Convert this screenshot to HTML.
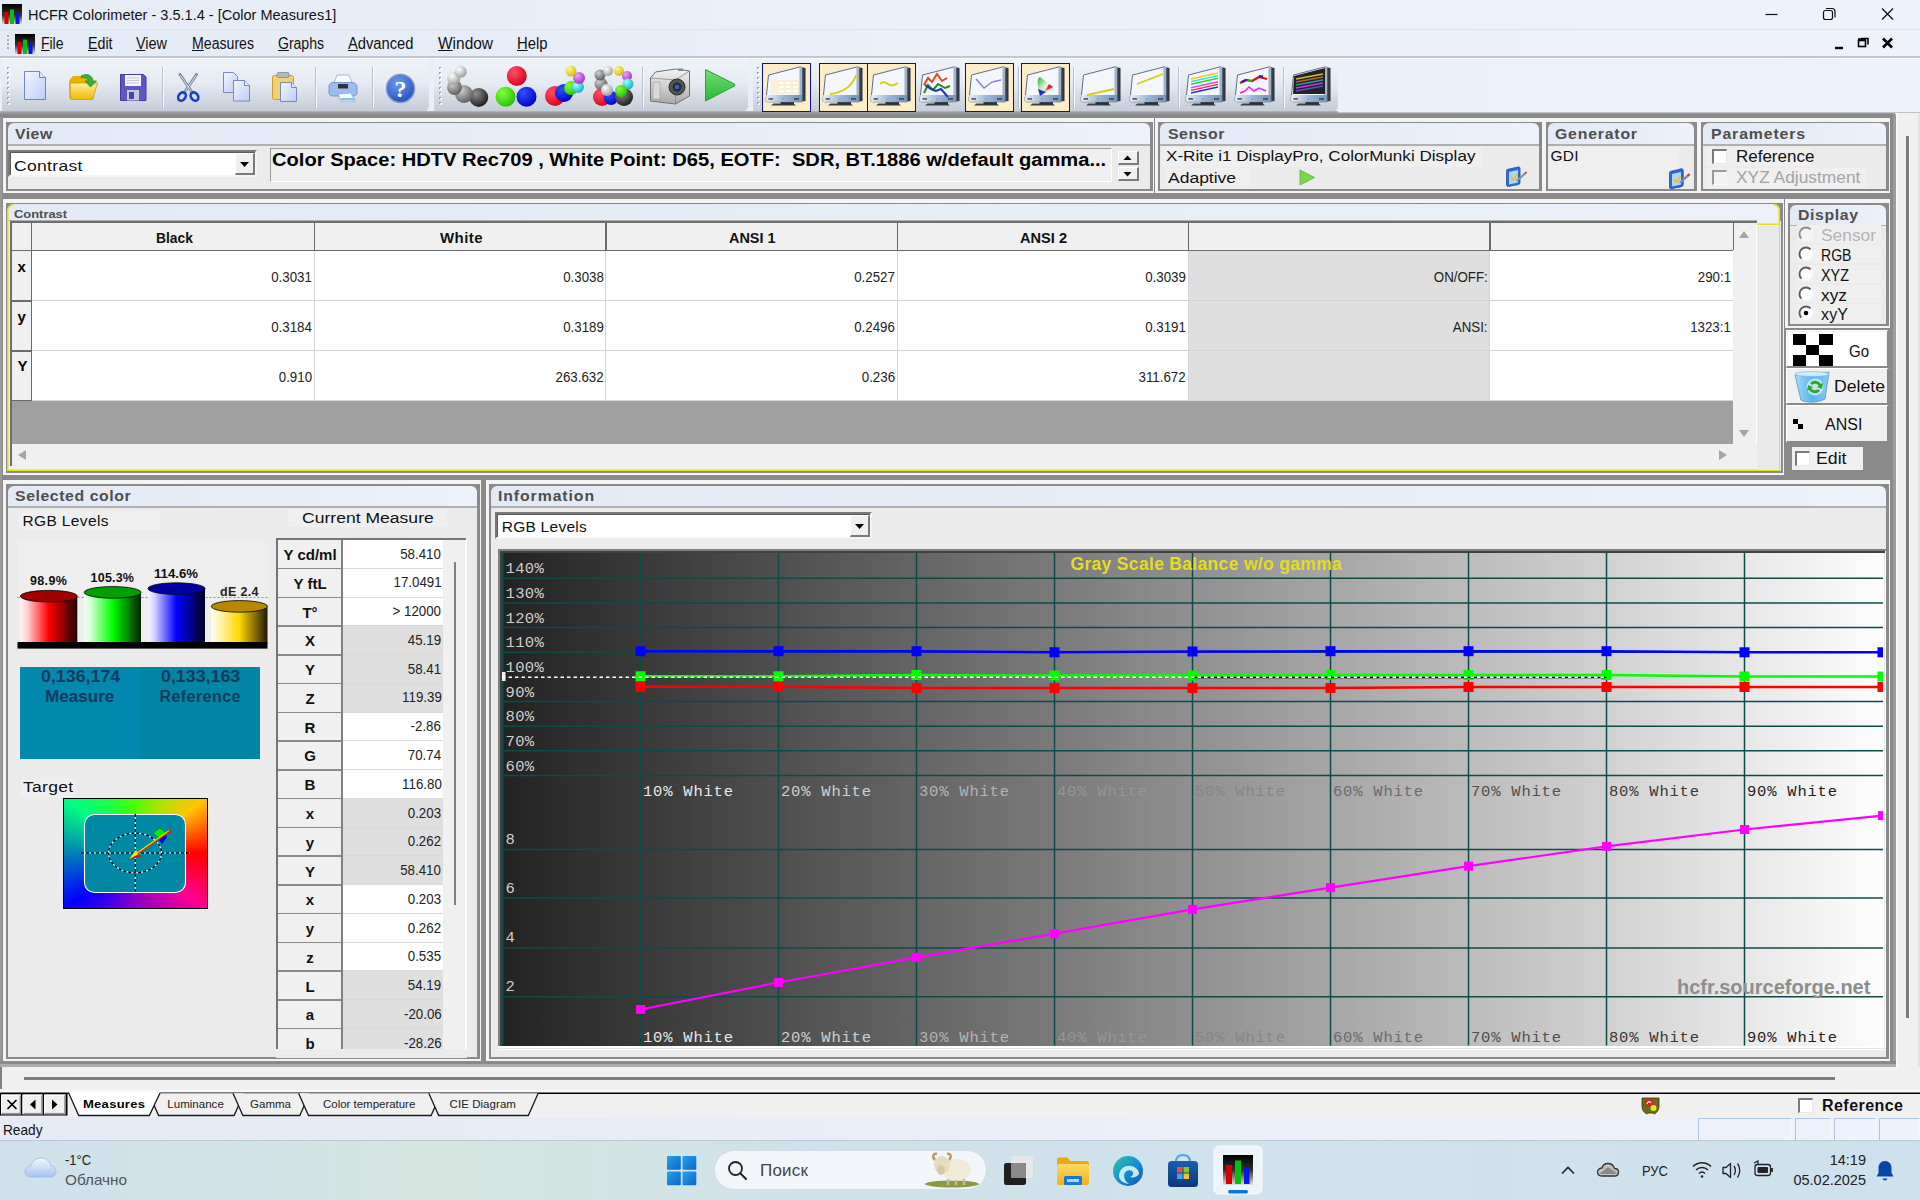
<!DOCTYPE html><html><head><meta charset="utf-8"><title>HCFR Colorimeter</title><style>
*{box-sizing:border-box;margin:0;padding:0}
html,body{width:1920px;height:1200px;overflow:hidden;background:#8a8a8a;font-family:"Liberation Sans",sans-serif;font-size:15px;color:#000}
.a{position:absolute}
.t{position:absolute;white-space:nowrap;line-height:1}
.m{font-family:"Liberation Mono",monospace}
.b{font-weight:bold}
.panel{position:absolute;background:#f4f4f4}
.panel>.in{position:absolute;left:3px;top:4px;right:1.5px;bottom:1.8px;background:#8a8a8a}
.panel>.hd{position:absolute;left:5px;right:4px;top:5.5px;background:#e5ecf6;border-radius:6px 6px 0 0}
.panel>.ln{position:absolute;left:5px;right:4px;height:1.5px;background:#b0b0b0}
.panel>.bd{position:absolute;left:5px;right:4px;bottom:4px;background:#ebebeb}
svg{position:absolute;overflow:visible}
</style></head><body>
<div class="a" style="left:0px;top:0px;width:1920px;height:29px;background:linear-gradient(90deg,#e5ecf6,#ebf0f9 50%,#eef2fa);"></div>
<div class="a" style="left:0px;top:28.5px;width:1920px;height:1px;background:#dce2ec;"></div>
<svg style="left:2px;top:4px" width="20" height="20" viewBox="0 0 20 20"><defs><linearGradient id="ig2" x1="0" y1="0" x2="0" y2="1"><stop offset="0" stop-color="#000"/><stop offset="0.55" stop-color="#333"/><stop offset="1" stop-color="#ddd"/></linearGradient></defs><rect width="20" height="20" fill="url(#ig2)"/><rect x="2.5" y="8" width="4" height="12" fill="#d80000"/><rect x="8" y="5.500" width="4" height="14.500" fill="#08c008"/><rect x="13.500" y="9.500" width="4" height="10.500" fill="#0818e0"/></svg>
<div class="t" style="left:27.5px;top:6.9px;font-size:15.5px;color:#111;letter-spacing:0.00px;transform:scaleX(0.937);transform-origin:0 50%;">HCFR Colorimeter - 3.5.1.4 - [Color Measures1]</div>
<svg style="left:0;top:0" width="1920" height="29"><path d="M1765.5 14.5h12" stroke="#111" stroke-width="1.2" fill="none"/><rect x="1823.5" y="10.5" width="9" height="9" rx="2" fill="none" stroke="#111" stroke-width="1.2"/><path d="M1826 8.5h6a3 3 0 0 1 3 3v6" fill="none" stroke="#111" stroke-width="1.2"/><path d="M1882 8.5l11 11M1893 8.5l-11 11" stroke="#111" stroke-width="1.3" fill="none"/></svg>
<div class="a" style="left:0px;top:29.5px;width:1920px;height:29px;background:linear-gradient(90deg,#e4ebf5,#eaeff8 50%,#eef2fa);"></div>
<div class="a" style="left:0px;top:56px;width:1920px;height:1.5px;background:#c2c6ce;"></div>
<div class="a" style="left:0px;top:57.5px;width:1920px;height:1px;background:#fafcfe;"></div>
<div class="a" style="left:7px;top:35px;width:2px;height:2px;background:#9fb0c8;"></div>
<div class="a" style="left:7px;top:39px;width:2px;height:2px;background:#9fb0c8;"></div>
<div class="a" style="left:7px;top:43px;width:2px;height:2px;background:#9fb0c8;"></div>
<div class="a" style="left:7px;top:47px;width:2px;height:2px;background:#9fb0c8;"></div>
<svg style="left:15px;top:34px" width="20" height="20" viewBox="0 0 20 20"><defs><linearGradient id="ig15" x1="0" y1="0" x2="0" y2="1"><stop offset="0" stop-color="#000"/><stop offset="0.55" stop-color="#333"/><stop offset="1" stop-color="#ddd"/></linearGradient></defs><rect width="20" height="20" fill="url(#ig15)"/><rect x="2.5" y="8" width="4" height="12" fill="#d80000"/><rect x="8" y="5.500" width="4" height="14.500" fill="#08c008"/><rect x="13.500" y="9.500" width="4" height="10.500" fill="#0818e0"/></svg>
<div class="t" style="left:41.0px;top:36.0px;font-size:16px;color:#111;letter-spacing:-0.07px;transform:scaleX(0.880);transform-origin:0 50%;"><u>F</u>ile</div>
<div class="t" style="left:87.5px;top:36.0px;font-size:16px;color:#111;letter-spacing:0.00px;transform:scaleX(0.889);transform-origin:0 50%;"><u>E</u>dit</div>
<div class="t" style="left:136.0px;top:36.0px;font-size:16px;color:#111;letter-spacing:0.00px;transform:scaleX(0.901);transform-origin:0 50%;"><u>V</u>iew</div>
<div class="t" style="left:191.5px;top:36.0px;font-size:16px;color:#111;letter-spacing:0.00px;transform:scaleX(0.883);transform-origin:0 50%;"><u>M</u>easures</div>
<div class="t" style="left:277.5px;top:36.0px;font-size:16px;color:#111;letter-spacing:-0.04px;transform:scaleX(0.880);transform-origin:0 50%;"><u>G</u>raphs</div>
<div class="t" style="left:347.5px;top:36.0px;font-size:16px;color:#111;letter-spacing:0.00px;transform:scaleX(0.920);transform-origin:0 50%;"><u>A</u>dvanced</div>
<div class="t" style="left:437.5px;top:36.0px;font-size:16px;color:#111;letter-spacing:0.00px;transform:scaleX(0.967);transform-origin:0 50%;"><u>W</u>indow</div>
<div class="t" style="left:516.5px;top:36.0px;font-size:16px;color:#111;letter-spacing:0.00px;transform:scaleX(0.927);transform-origin:0 50%;"><u>H</u>elp</div>
<svg style="left:0;top:29px" width="1920" height="29"><path d="M1835 19h8" stroke="#000" stroke-width="2.4"/><rect x="1858.5" y="11.5" width="7" height="6" fill="#e8edf6" stroke="#000" stroke-width="1.6"/><path d="M1861 9.5h7v6" fill="none" stroke="#000" stroke-width="1.6"/><path d="M1858 10.2h8" stroke="#000" stroke-width="2"/><path d="M1883 9.5l9 9M1892 9.5l-9 9" stroke="#000" stroke-width="2.6"/></svg>
<div class="a" style="left:0px;top:58.5px;width:1920px;height:55px;background:linear-gradient(90deg,#e8edf6,#ebf0f8 60%,#eef2fa);"></div>
<div class="a" style="left:2px;top:59px;width:427px;height:53px;background:linear-gradient(#eff3f9 0%,#e6ebf3 45%,#d3d9e3 75%,#c6cdd8 100%);border-radius:0 0 6px 3px"></div>
<div class="a" style="left:434px;top:59px;width:314px;height:53px;background:linear-gradient(#eff3f9 0%,#e6ebf3 45%,#d3d9e3 75%,#c6cdd8 100%);border-radius:0 0 6px 3px"></div>
<div class="a" style="left:753px;top:59px;width:585px;height:53px;background:linear-gradient(#eff3f9 0%,#e6ebf3 45%,#d3d9e3 75%,#c6cdd8 100%);border-radius:0 0 6px 3px"></div>
<div class="a" style="left:0px;top:111px;width:1338px;height:2px;background:linear-gradient(#b4bac4,#8f949c);"></div>
<div class="a" style="left:1338px;top:112.3px;width:582px;height:1px;background:#c0c4cc;"></div>
<div class="a" style="left:7px;top:67px;width:2px;height:2px;background:#8fa4c4;"></div>
<div class="a" style="left:8px;top:68px;width:2px;height:2px;background:#fff;opacity:.8"></div>
<div class="a" style="left:7px;top:72px;width:2px;height:2px;background:#8fa4c4;"></div>
<div class="a" style="left:8px;top:73px;width:2px;height:2px;background:#fff;opacity:.8"></div>
<div class="a" style="left:7px;top:77px;width:2px;height:2px;background:#8fa4c4;"></div>
<div class="a" style="left:8px;top:78px;width:2px;height:2px;background:#fff;opacity:.8"></div>
<div class="a" style="left:7px;top:82px;width:2px;height:2px;background:#8fa4c4;"></div>
<div class="a" style="left:8px;top:83px;width:2px;height:2px;background:#fff;opacity:.8"></div>
<div class="a" style="left:7px;top:87px;width:2px;height:2px;background:#8fa4c4;"></div>
<div class="a" style="left:8px;top:88px;width:2px;height:2px;background:#fff;opacity:.8"></div>
<div class="a" style="left:7px;top:92px;width:2px;height:2px;background:#8fa4c4;"></div>
<div class="a" style="left:8px;top:93px;width:2px;height:2px;background:#fff;opacity:.8"></div>
<div class="a" style="left:7px;top:97px;width:2px;height:2px;background:#8fa4c4;"></div>
<div class="a" style="left:8px;top:98px;width:2px;height:2px;background:#fff;opacity:.8"></div>
<div class="a" style="left:7px;top:102px;width:2px;height:2px;background:#8fa4c4;"></div>
<div class="a" style="left:8px;top:103px;width:2px;height:2px;background:#fff;opacity:.8"></div>
<div class="a" style="left:439px;top:67px;width:2px;height:2px;background:#8fa4c4;"></div>
<div class="a" style="left:440px;top:68px;width:2px;height:2px;background:#fff;opacity:.8"></div>
<div class="a" style="left:439px;top:72px;width:2px;height:2px;background:#8fa4c4;"></div>
<div class="a" style="left:440px;top:73px;width:2px;height:2px;background:#fff;opacity:.8"></div>
<div class="a" style="left:439px;top:77px;width:2px;height:2px;background:#8fa4c4;"></div>
<div class="a" style="left:440px;top:78px;width:2px;height:2px;background:#fff;opacity:.8"></div>
<div class="a" style="left:439px;top:82px;width:2px;height:2px;background:#8fa4c4;"></div>
<div class="a" style="left:440px;top:83px;width:2px;height:2px;background:#fff;opacity:.8"></div>
<div class="a" style="left:439px;top:87px;width:2px;height:2px;background:#8fa4c4;"></div>
<div class="a" style="left:440px;top:88px;width:2px;height:2px;background:#fff;opacity:.8"></div>
<div class="a" style="left:439px;top:92px;width:2px;height:2px;background:#8fa4c4;"></div>
<div class="a" style="left:440px;top:93px;width:2px;height:2px;background:#fff;opacity:.8"></div>
<div class="a" style="left:439px;top:97px;width:2px;height:2px;background:#8fa4c4;"></div>
<div class="a" style="left:440px;top:98px;width:2px;height:2px;background:#fff;opacity:.8"></div>
<div class="a" style="left:439px;top:102px;width:2px;height:2px;background:#8fa4c4;"></div>
<div class="a" style="left:440px;top:103px;width:2px;height:2px;background:#fff;opacity:.8"></div>
<div class="a" style="left:757px;top:67px;width:2px;height:2px;background:#8fa4c4;"></div>
<div class="a" style="left:758px;top:68px;width:2px;height:2px;background:#fff;opacity:.8"></div>
<div class="a" style="left:757px;top:72px;width:2px;height:2px;background:#8fa4c4;"></div>
<div class="a" style="left:758px;top:73px;width:2px;height:2px;background:#fff;opacity:.8"></div>
<div class="a" style="left:757px;top:77px;width:2px;height:2px;background:#8fa4c4;"></div>
<div class="a" style="left:758px;top:78px;width:2px;height:2px;background:#fff;opacity:.8"></div>
<div class="a" style="left:757px;top:82px;width:2px;height:2px;background:#8fa4c4;"></div>
<div class="a" style="left:758px;top:83px;width:2px;height:2px;background:#fff;opacity:.8"></div>
<div class="a" style="left:757px;top:87px;width:2px;height:2px;background:#8fa4c4;"></div>
<div class="a" style="left:758px;top:88px;width:2px;height:2px;background:#fff;opacity:.8"></div>
<div class="a" style="left:757px;top:92px;width:2px;height:2px;background:#8fa4c4;"></div>
<div class="a" style="left:758px;top:93px;width:2px;height:2px;background:#fff;opacity:.8"></div>
<div class="a" style="left:757px;top:97px;width:2px;height:2px;background:#8fa4c4;"></div>
<div class="a" style="left:758px;top:98px;width:2px;height:2px;background:#fff;opacity:.8"></div>
<div class="a" style="left:757px;top:102px;width:2px;height:2px;background:#8fa4c4;"></div>
<div class="a" style="left:758px;top:103px;width:2px;height:2px;background:#fff;opacity:.8"></div>
<div class="a" style="left:162px;top:67px;width:1px;height:41px;background:#b8c0cc;"></div>
<div class="a" style="left:163px;top:67px;width:1px;height:41px;background:#f8fafc;"></div>
<div class="a" style="left:315px;top:67px;width:1px;height:41px;background:#b8c0cc;"></div>
<div class="a" style="left:316px;top:67px;width:1px;height:41px;background:#f8fafc;"></div>
<div class="a" style="left:372px;top:67px;width:1px;height:41px;background:#b8c0cc;"></div>
<div class="a" style="left:373px;top:67px;width:1px;height:41px;background:#f8fafc;"></div>
<div class="a" style="left:642px;top:67px;width:1px;height:41px;background:#b8c0cc;"></div>
<div class="a" style="left:643px;top:67px;width:1px;height:41px;background:#f8fafc;"></div>
<div class="a" style="left:1018px;top:67px;width:1px;height:41px;background:#b8c0cc;"></div>
<div class="a" style="left:1019px;top:67px;width:1px;height:41px;background:#f8fafc;"></div>
<div class="a" style="left:1073px;top:67px;width:1px;height:41px;background:#b8c0cc;"></div>
<div class="a" style="left:1074px;top:67px;width:1px;height:41px;background:#f8fafc;"></div>
<div class="a" style="left:1178px;top:67px;width:1px;height:41px;background:#b8c0cc;"></div>
<div class="a" style="left:1179px;top:67px;width:1px;height:41px;background:#f8fafc;"></div>
<div class="a" style="left:1283px;top:67px;width:1px;height:41px;background:#b8c0cc;"></div>
<div class="a" style="left:1284px;top:67px;width:1px;height:41px;background:#f8fafc;"></div>
<div class="a" style="left:762px;top:63px;width:49px;height:49px;background:#fdecc8;border:1.5px solid #10108c"></div>
<div class="a" style="left:819px;top:63px;width:49px;height:49px;background:#fdecc8;border:1.5px solid #10108c"></div>
<div class="a" style="left:867px;top:63px;width:49px;height:49px;background:#fdecc8;border:1.5px solid #10108c"></div>
<div class="a" style="left:965px;top:63px;width:49px;height:49px;background:#fdecc8;border:1.5px solid #10108c"></div>
<div class="a" style="left:1021px;top:63px;width:49px;height:49px;background:#fdecc8;border:1.5px solid #10108c"></div>
<svg style="left:0;top:0" width="1920" height="116"><defs><linearGradient id="gpage" x1="0" y1="0" x2="1" y2="1"><stop offset="0" stop-color="#f4f7ff"/><stop offset="1" stop-color="#bccdf4"/></linearGradient><linearGradient id="gfold" x1="0" y1="0" x2="0" y2="1"><stop offset="0" stop-color="#fff0a0"/><stop offset="1" stop-color="#f0b800"/></linearGradient><radialGradient id="ghelp" cx=".4" cy=".3" r=".8"><stop offset="0" stop-color="#6f9bf0"/><stop offset="1" stop-color="#1b49b8"/></radialGradient><radialGradient id="bR" cx=".35" cy=".3" r=".75"><stop offset="0" stop-color="#ff5060"/><stop offset="1" stop-color="#d80020"/></radialGradient><radialGradient id="bG" cx=".35" cy=".3" r=".75"><stop offset="0" stop-color="#80ff40"/><stop offset="1" stop-color="#28c000"/></radialGradient><radialGradient id="bB" cx=".35" cy=".3" r=".75"><stop offset="0" stop-color="#3050ff"/><stop offset="1" stop-color="#0000c8"/></radialGradient><radialGradient id="bW" cx=".35" cy=".3" r=".75"><stop offset="0" stop-color="#ffffff"/><stop offset="1" stop-color="#9a9a9a"/></radialGradient><radialGradient id="bK" cx=".35" cy=".3" r=".75"><stop offset="0" stop-color="#909090"/><stop offset="1" stop-color="#1a1a1a"/></radialGradient><radialGradient id="bY" cx=".35" cy=".3" r=".75"><stop offset="0" stop-color="#fff890"/><stop offset="1" stop-color="#d8b800"/></radialGradient><radialGradient id="bM" cx=".35" cy=".3" r=".75"><stop offset="0" stop-color="#f0a0ff"/><stop offset="1" stop-color="#a030c0"/></radialGradient><radialGradient id="bC" cx=".35" cy=".3" r=".75"><stop offset="0" stop-color="#a0ffff"/><stop offset="1" stop-color="#10b0c0"/></radialGradient><radialGradient id="bGr" cx=".35" cy=".3" r=".75"><stop offset="0" stop-color="#d0d0d0"/><stop offset="1" stop-color="#5a5a5a"/></radialGradient><linearGradient id="gbez" x1="0" y1="0" x2="1" y2="0"><stop offset="0" stop-color="#e8eef6"/><stop offset="0.5" stop-color="#9fb6d4"/><stop offset="1" stop-color="#6f8fb8"/></linearGradient><linearGradient id="gside" x1="0" y1="0" x2="1" y2="0"><stop offset="0" stop-color="#8a9ab0"/><stop offset="0.5" stop-color="#3a4250"/><stop offset="1" stop-color="#2a2e36"/></linearGradient><linearGradient id="gplay" x1="0" y1="0" x2="0" y2="1"><stop offset="0" stop-color="#70e070"/><stop offset="1" stop-color="#28b838"/></linearGradient><linearGradient id="gcam" x1="0" y1="0" x2="0" y2="1"><stop offset="0" stop-color="#f4f4f4"/><stop offset="1" stop-color="#a8a8a8"/></linearGradient></defs><path d="M24.5 71.5h15l6 6v22h-21z" fill="url(#gpage)" stroke="#6d86c4" stroke-width="1"/><path d="M39.5 71.5v6h6" fill="#dfe8fb" stroke="#6d86c4" stroke-width="1"/><path d="M70 79l3-3h8l2 2h10v5H70z" fill="#e8b000"/><path d="M69.5 83h24l4 0-5 16.5H71z" fill="url(#gfold)" stroke="#d09a00" stroke-width=".8"/><path d="M70 80v19" stroke="#d8a400" stroke-width="1.2"/><path d="M81 76c6-3 11-1 12 5h3.5l-6 6-5.5-6h3.5c-1-3-4-4-7-3z" fill="#38b040" stroke="#1f8a2a" stroke-width=".7"/><path d="M120.5 74.5h23l2.500 2.500v23.5h-25.500z" fill="#5c58c4" stroke="#3f3ca0" stroke-width="1"/><rect x="125" y="75" width="16" height="11" fill="#f4f4f8"/><path d="M127 78h12M127 80.5h12M127 83h12" stroke="#b8b8c8" stroke-width=".8"/><rect x="127" y="90" width="12" height="10.5" fill="#c8c8d8"/><rect x="129" y="92" width="5" height="7" fill="#4844a8"/><path d="M180 74.500l12.500 18.500M196.500 74.500l-12.500 18.500" stroke="#7c8aa0" stroke-width="3" stroke-linecap="round"/><path d="M180.300 75l12 18M196.200 75l-12 18" stroke="#d4dae4" stroke-width="1"/><ellipse cx="182" cy="96.500" rx="3.400" ry="4.600" transform="rotate(35 182 96.500)" fill="none" stroke="#1440c0" stroke-width="2.600"/><ellipse cx="194.500" cy="96.500" rx="3.400" ry="4.600" transform="rotate(-35 194.500 96.500)" fill="none" stroke="#1440c0" stroke-width="2.600"/><path d="M223.500 72.500h10l4 4v16h-14z" fill="url(#gpage)" stroke="#7a88c0" stroke-width="1"/><path d="M233.500 80.500h11l5 5v15.500h-16z" fill="url(#gpage)" stroke="#7a88c0" stroke-width="1"/><path d="M244.500 80.500v5h5" fill="#e4ecfc" stroke="#7a88c0" stroke-width="1"/><rect x="272.500" y="75.500" width="21" height="24" rx="2" fill="#f0d070" stroke="#c8a030" stroke-width="1"/><rect x="277" y="72.500" width="12" height="5" rx="1.500" fill="#b8b8c0" stroke="#888" stroke-width=".8"/><path d="M280.500 82.500h11l5 5v14h-16z" fill="url(#gpage)" stroke="#7a88c0" stroke-width="1"/><path d="M291.500 82.500v5h5" fill="#e4ecfc" stroke="#7a88c0" stroke-width="1"/><path d="M333 86l4-11h12l3 8z" fill="#fafcff" stroke="#90a8d0" stroke-width=".8"/><path d="M329 86c0-2 2-3.500 4-3.500h19c3 0 5 2 5 4.500v6c0 2-2 3-4 3h-20c-2 0-4-1-4-3z" fill="#9cbcec" stroke="#6488c8" stroke-width=".8"/><rect x="338" y="84" width="10" height="4.500" fill="#30343c"/><path d="M338 94l3 7h14l-4-8z" fill="#f8fbff" stroke="#80a8e0" stroke-width=".8"/><path d="M341 99h13" stroke="#50b0f0" stroke-width="1.500"/><circle cx="400.500" cy="88.500" r="14" fill="url(#ghelp)" stroke="#8098c8" stroke-width="1.500"/><text x="400.500" y="96.500" font-family="Liberation Serif" font-weight="bold" font-size="24" fill="#fff" text-anchor="middle">?</text><circle cx="478.7" cy="97.4" r="9.5" fill="url(#bK)"/><circle cx="464" cy="94" r="9" fill="url(#bGr)"/><circle cx="454.5" cy="87.4" r="7.5" fill="url(#bGr)"/><circle cx="453.7" cy="78.4" r="6.5" fill="url(#bW)"/><circle cx="460.8" cy="71.7" r="6" fill="url(#bW)"/><circle cx="516.800" cy="76" r="10" fill="url(#bR)"/><circle cx="505.600" cy="96.800" r="10" fill="url(#bG)"/><circle cx="526.500" cy="96.800" r="10" fill="url(#bB)"/><circle cx="555" cy="96" r="10" fill="url(#bR)"/><circle cx="564" cy="93" r="9" fill="url(#bB)"/><circle cx="571" cy="88" r="7" fill="url(#bG)"/><circle cx="578" cy="87" r="6" fill="url(#bC)"/><circle cx="579" cy="78" r="6" fill="url(#bM)"/><circle cx="571" cy="71" r="5.5" fill="url(#bY)"/><circle cx="602" cy="97" r="9" fill="url(#bR)"/><circle cx="611" cy="98" r="7" fill="url(#bB)"/><circle cx="624" cy="97" r="9" fill="url(#bK)"/><circle cx="601" cy="84" r="6.5" fill="url(#bGr)"/><circle cx="600" cy="75" r="5.5" fill="url(#bGr)"/><circle cx="608" cy="71" r="5" fill="url(#bW)"/><circle cx="619" cy="71" r="5" fill="url(#bY)"/><circle cx="627" cy="76" r="5" fill="url(#bM)"/><circle cx="628" cy="84" r="5.5" fill="url(#bC)"/><circle cx="621" cy="91" r="6" fill="url(#bG)"/><circle cx="607" cy="90" r="6" fill="url(#bW)"/><path d="M650.500 78l5-6 20-3 14 2v25l-14 8-25-3z" fill="url(#gcam)" stroke="#707070" stroke-width="1"/><path d="M650.500 78l25 2v24M675.500 80l14-9" stroke="#888" stroke-width=".8" fill="none"/><rect x="653" y="82" width="7" height="17" fill="#d8d8d8" stroke="#999" stroke-width=".6"/><circle cx="677" cy="87" r="8" fill="#505458" stroke="#303030" stroke-width="1"/><circle cx="677" cy="87" r="4.500" fill="#2a2c30"/><circle cx="677" cy="87" r="2.200" fill="#2868d8"/><rect x="678" y="68.500" width="5" height="2.500" fill="#888"/><path d="M705.500 69.500l29 14.500v2l-29 15z" fill="url(#gplay)" stroke="#30a040" stroke-width="1"/><g transform="translate(762 63)"><path d="M9 42.5h25l-2.5-2h-20z" fill="#3a3f48"/><rect x="18.5" y="38.5" width="13.5" height="3" fill="#2c3038"/><path d="M38.5 4l5 1v33l-5 0.8z" fill="url(#gside)"/><path d="M6.5 12L38.5 3.8c1 0 1.5 .5 1.5 1.5V38.8H5.5c-1.2 0-1.6-.8-1.5-2z" fill="#f4f6fa" stroke="#5c6e88" stroke-width="1"/><path d="M4.3 32H40v6.8H5.5c-1.2 0-1.6-.8-1.5-2z" fill="url(#gbez)"/><rect x="6.5" y="35" width="4.5" height="1.8" fill="#5a626e"/><rect x="32" y="35" width="5" height="1.8" fill="#4a525e"/><circle cx="21" cy="36" r=".8" fill="#7890b0"/><path d="M38.2 5v33.5" stroke="#8aa0c0" stroke-width="1.2"/></g><rect x="771" y="80" width="28" height="14" fill="#fdecc8" opacity=".7"/><rect x="779" y="82" width="4.500" height="2" fill="#fff"/><rect x="786" y="82" width="4.500" height="2" fill="#fff"/><rect x="793" y="82" width="4.500" height="2" fill="#fff"/><rect x="779" y="86" width="4.500" height="2" fill="#fff"/><rect x="786" y="86" width="4.500" height="2" fill="#fff"/><rect x="793" y="86" width="4.500" height="2" fill="#fff"/><rect x="779" y="90" width="4.500" height="2" fill="#fff"/><rect x="786" y="90" width="4.500" height="2" fill="#fff"/><rect x="793" y="90" width="4.500" height="2" fill="#fff"/><g transform="translate(819 63)"><path d="M9 42.5h25l-2.5-2h-20z" fill="#3a3f48"/><rect x="18.5" y="38.5" width="13.5" height="3" fill="#2c3038"/><path d="M38.5 4l5 1v33l-5 0.8z" fill="url(#gside)"/><path d="M6.5 12L38.5 3.8c1 0 1.5 .5 1.5 1.5V38.8H5.5c-1.2 0-1.6-.8-1.5-2z" fill="#f4f6fa" stroke="#5c6e88" stroke-width="1"/><path d="M4.3 32H40v6.8H5.5c-1.2 0-1.6-.8-1.5-2z" fill="url(#gbez)"/><rect x="6.5" y="35" width="4.5" height="1.8" fill="#5a626e"/><rect x="32" y="35" width="5" height="1.8" fill="#4a525e"/><circle cx="21" cy="36" r=".8" fill="#7890b0"/><path d="M38.2 5v33.5" stroke="#8aa0c0" stroke-width="1.2"/></g><path d="M830 94c10-1 22-6 26-19" stroke="#d8d000" stroke-width="1.800" fill="none"/><g transform="translate(867 63)"><path d="M9 42.5h25l-2.5-2h-20z" fill="#3a3f48"/><rect x="18.5" y="38.5" width="13.5" height="3" fill="#2c3038"/><path d="M38.5 4l5 1v33l-5 0.8z" fill="url(#gside)"/><path d="M6.5 12L38.5 3.8c1 0 1.5 .5 1.5 1.5V38.8H5.5c-1.2 0-1.6-.8-1.5-2z" fill="#f4f6fa" stroke="#5c6e88" stroke-width="1"/><path d="M4.3 32H40v6.8H5.5c-1.2 0-1.6-.8-1.5-2z" fill="url(#gbez)"/><rect x="6.5" y="35" width="4.5" height="1.8" fill="#5a626e"/><rect x="32" y="35" width="5" height="1.8" fill="#4a525e"/><circle cx="21" cy="36" r=".8" fill="#7890b0"/><path d="M38.2 5v33.5" stroke="#8aa0c0" stroke-width="1.2"/></g><path d="M880 84c3-3 5-2 8 0s5 2 10-1" stroke="#d8d000" stroke-width="1.800" fill="none"/><g transform="translate(916 63)"><path d="M9 42.5h25l-2.5-2h-20z" fill="#3a3f48"/><rect x="18.5" y="38.5" width="13.5" height="3" fill="#2c3038"/><path d="M38.5 4l5 1v33l-5 0.8z" fill="url(#gside)"/><path d="M6.5 12L38.5 3.8c1 0 1.5 .5 1.5 1.5V38.8H5.5c-1.2 0-1.6-.8-1.5-2z" fill="#f4f6fa" stroke="#5c6e88" stroke-width="1"/><path d="M4.3 32H40v6.8H5.5c-1.2 0-1.6-.8-1.5-2z" fill="url(#gbez)"/><rect x="6.5" y="35" width="4.5" height="1.8" fill="#5a626e"/><rect x="32" y="35" width="5" height="1.8" fill="#4a525e"/><circle cx="21" cy="36" r=".8" fill="#7890b0"/><path d="M38.2 5v33.5" stroke="#8aa0c0" stroke-width="1.2"/></g><path d="M924 85l4-7 4 4 5-8 5 7 5-3" stroke="#e04818" stroke-width="2" fill="none"/><path d="M924 93l4-8 5 5 5-6 7 4 5-2" stroke="#189020" stroke-width="2" fill="none"/><path d="M925 85l6 4 5 2 5-2 7 8" stroke="#1838c0" stroke-width="2" fill="none"/><g transform="translate(965 63)"><path d="M9 42.5h25l-2.5-2h-20z" fill="#3a3f48"/><rect x="18.5" y="38.5" width="13.5" height="3" fill="#2c3038"/><path d="M38.5 4l5 1v33l-5 0.8z" fill="url(#gside)"/><path d="M6.5 12L38.5 3.8c1 0 1.5 .5 1.5 1.5V38.8H5.5c-1.2 0-1.6-.8-1.5-2z" fill="#f4f6fa" stroke="#5c6e88" stroke-width="1"/><path d="M4.3 32H40v6.8H5.5c-1.2 0-1.6-.8-1.5-2z" fill="url(#gbez)"/><rect x="6.5" y="35" width="4.5" height="1.8" fill="#5a626e"/><rect x="32" y="35" width="5" height="1.8" fill="#4a525e"/><circle cx="21" cy="36" r=".8" fill="#7890b0"/><path d="M38.2 5v33.5" stroke="#8aa0c0" stroke-width="1.2"/></g><path d="M976 79l8 9 8-6 9-2" stroke="#8878e0" stroke-width="1.300" fill="none"/><g transform="translate(1021 63)"><path d="M9 42.5h25l-2.5-2h-20z" fill="#3a3f48"/><rect x="18.5" y="38.5" width="13.5" height="3" fill="#2c3038"/><path d="M38.5 4l5 1v33l-5 0.8z" fill="url(#gside)"/><path d="M6.5 12L38.5 3.8c1 0 1.5 .5 1.5 1.5V38.8H5.5c-1.2 0-1.6-.8-1.5-2z" fill="#f4f6fa" stroke="#5c6e88" stroke-width="1"/><path d="M4.3 32H40v6.8H5.5c-1.2 0-1.6-.8-1.5-2z" fill="url(#gbez)"/><rect x="6.5" y="35" width="4.5" height="1.8" fill="#5a626e"/><rect x="32" y="35" width="5" height="1.8" fill="#4a525e"/><circle cx="21" cy="36" r=".8" fill="#7890b0"/><path d="M38.2 5v33.5" stroke="#8aa0c0" stroke-width="1.2"/></g><defs><linearGradient id="gcie" x1="0" y1="0" x2="1" y2="1"><stop offset="0" stop-color="#10c030"/><stop offset=".5" stop-color="#f0f0e0"/><stop offset="1" stop-color="#e02020"/></linearGradient></defs><path d="M1040 77c-2 0-3 4-2 10l2 9 13-9z" fill="url(#gcie)"/><path d="M1038 89l2 7 6-4z" fill="#2030e0"/><path d="M1046 90l7-3-4-3z" fill="#f02020"/><g transform="translate(1077 63)"><path d="M9 42.5h25l-2.5-2h-20z" fill="#3a3f48"/><rect x="18.5" y="38.5" width="13.5" height="3" fill="#2c3038"/><path d="M38.5 4l5 1v33l-5 0.8z" fill="url(#gside)"/><path d="M6.5 12L38.5 3.8c1 0 1.5 .5 1.5 1.5V38.8H5.5c-1.2 0-1.6-.8-1.5-2z" fill="#f4f6fa" stroke="#5c6e88" stroke-width="1"/><path d="M4.3 32H40v6.8H5.5c-1.2 0-1.6-.8-1.5-2z" fill="url(#gbez)"/><rect x="6.5" y="35" width="4.5" height="1.8" fill="#5a626e"/><rect x="32" y="35" width="5" height="1.8" fill="#4a525e"/><circle cx="21" cy="36" r=".8" fill="#7890b0"/><path d="M38.2 5v33.5" stroke="#8aa0c0" stroke-width="1.2"/></g><path d="M1087 95l27-6" stroke="#d8d000" stroke-width="1.800" fill="none"/><g transform="translate(1126 63)"><path d="M9 42.5h25l-2.5-2h-20z" fill="#3a3f48"/><rect x="18.5" y="38.5" width="13.5" height="3" fill="#2c3038"/><path d="M38.5 4l5 1v33l-5 0.8z" fill="url(#gside)"/><path d="M6.5 12L38.5 3.8c1 0 1.5 .5 1.5 1.5V38.8H5.5c-1.2 0-1.6-.8-1.5-2z" fill="#f4f6fa" stroke="#5c6e88" stroke-width="1"/><path d="M4.3 32H40v6.8H5.5c-1.2 0-1.6-.8-1.5-2z" fill="url(#gbez)"/><rect x="6.5" y="35" width="4.5" height="1.8" fill="#5a626e"/><rect x="32" y="35" width="5" height="1.8" fill="#4a525e"/><circle cx="21" cy="36" r=".8" fill="#7890b0"/><path d="M38.2 5v33.5" stroke="#8aa0c0" stroke-width="1.2"/></g><path d="M1137 84l26-10" stroke="#d8d000" stroke-width="1.800" fill="none"/><g transform="translate(1182 63)"><path d="M9 42.5h25l-2.5-2h-20z" fill="#3a3f48"/><rect x="18.5" y="38.5" width="13.5" height="3" fill="#2c3038"/><path d="M38.5 4l5 1v33l-5 0.8z" fill="url(#gside)"/><path d="M6.5 12L38.5 3.8c1 0 1.5 .5 1.5 1.5V38.8H5.5c-1.2 0-1.6-.8-1.5-2z" fill="#f4f6fa" stroke="#5c6e88" stroke-width="1"/><path d="M4.3 32H40v6.8H5.5c-1.2 0-1.6-.8-1.5-2z" fill="url(#gbez)"/><rect x="6.5" y="35" width="4.5" height="1.8" fill="#5a626e"/><rect x="32" y="35" width="5" height="1.8" fill="#4a525e"/><circle cx="21" cy="36" r=".8" fill="#7890b0"/><path d="M38.2 5v33.5" stroke="#8aa0c0" stroke-width="1.2"/></g><path d="M1191 79.0l27-6" stroke="#e0d020" stroke-width="1.400" fill="none"/><path d="M1191 81.6l27-6" stroke="#20e0e0" stroke-width="1.400" fill="none"/><path d="M1191 84.2l27-6" stroke="#20e020" stroke-width="1.400" fill="none"/><path d="M1191 87.8l27-6" stroke="#f040f0" stroke-width="1.400" fill="none"/><path d="M1191 90.4l27-6" stroke="#f03030" stroke-width="1.400" fill="none"/><path d="M1191 93.0l27-6" stroke="#2030f0" stroke-width="1.400" fill="none"/><g transform="translate(1231 63)"><path d="M9 42.5h25l-2.5-2h-20z" fill="#3a3f48"/><rect x="18.5" y="38.5" width="13.5" height="3" fill="#2c3038"/><path d="M38.5 4l5 1v33l-5 0.8z" fill="url(#gside)"/><path d="M6.5 12L38.5 3.8c1 0 1.5 .5 1.5 1.5V38.8H5.5c-1.2 0-1.6-.8-1.5-2z" fill="#f4f6fa" stroke="#5c6e88" stroke-width="1"/><path d="M4.3 32H40v6.8H5.5c-1.2 0-1.6-.8-1.5-2z" fill="url(#gbez)"/><rect x="6.5" y="35" width="4.5" height="1.8" fill="#5a626e"/><rect x="32" y="35" width="5" height="1.8" fill="#4a525e"/><circle cx="21" cy="36" r=".8" fill="#7890b0"/><path d="M38.2 5v33.5" stroke="#8aa0c0" stroke-width="1.2"/></g><path d="M1240 83l6-3 6 1 7-4 8 2" stroke="#e01010" stroke-width="2.200" fill="none"/><path d="M1242 82l4-2M1259 76l4 .5" stroke="#1020e0" stroke-width="2.200" fill="none"/><path d="M1248 80.5l4 .5" stroke="#10c010" stroke-width="2.200"/><path d="M1240 93l5-2 4-4 5 4 5-3 7 3" stroke="#f020f0" stroke-width="1.500" fill="none"/><g transform="translate(1287 63)"><path d="M9 42.5h25l-2.5-2h-20z" fill="#3a3f48"/><rect x="18.5" y="38.5" width="13.5" height="3" fill="#2c3038"/><path d="M38.5 4l5 1v33l-5 0.8z" fill="url(#gside)"/><path d="M6.5 12L38.5 3.8c1 0 1.5 .5 1.5 1.5V38.8H5.5c-1.2 0-1.6-.8-1.5-2z" fill="#f4f6fa" stroke="#5c6e88" stroke-width="1"/><path d="M4.3 32H40v6.8H5.5c-1.2 0-1.6-.8-1.5-2z" fill="url(#gbez)"/><rect x="6.5" y="35" width="4.5" height="1.8" fill="#5a626e"/><rect x="32" y="35" width="5" height="1.8" fill="#4a525e"/><circle cx="21" cy="36" r=".8" fill="#7890b0"/><path d="M38.2 5v33.5" stroke="#8aa0c0" stroke-width="1.2"/></g><path d="M1294 76L1325 68V94H1293z" fill="#202428"/><path d="M1296 79l27-5" stroke="#d0c020" stroke-width="1.500" fill="none"/><path d="M1296 82l27-5" stroke="#c06020" stroke-width="1.500" fill="none"/><path d="M1296 85l27-5" stroke="#20a0a0" stroke-width="1.500" fill="none"/><path d="M1296 88l27-5" stroke="#e030e0" stroke-width="1.500" fill="none"/><path d="M1296 91l27-5" stroke="#6050c0" stroke-width="1.500" fill="none"/></svg>
<div class="a" style="left:1896px;top:113px;width:24px;height:980px;background:#f0f0f0;"></div>
<div class="a" style="left:1892.5px;top:114px;width:3.5px;height:953px;background:#9c9c9c;"></div>
<div class="a" style="left:1896px;top:113px;width:2px;height:955px;background:#f9f9f9;"></div>
<div class="a" style="left:1909px;top:136px;width:1px;height:882px;background:#fbfbfb;"></div>
<div class="a" style="left:1918px;top:113px;width:2px;height:980px;background:#e2e2e2;"></div>
<div class="a" style="left:1906px;top:136px;width:3px;height:882px;background:#7c7c7c;"></div>
<div class="a" style="left:0px;top:113px;width:1895px;height:1px;background:#9a9a9a;"></div>
<div class="a" style="left:0px;top:117px;width:2px;height:952px;background:#999;"></div>
<div class="panel" style="left:3px;top:117.5px;width:1151px;height:75px"><div class="in" style="background:#8a8a8a"></div><div class="hd" style="height:21px;background:linear-gradient(90deg,#e3eaf5,#e6edf7 50%,#ecf1fa)"></div><div class="ln" style="top:26.5px"></div><div class="bd" style="top:28px"></div></div>
<div class="t b" style="left:14.8px;top:126.9px;font-size:14px;color:#4e4e4e;letter-spacing:0.42px;transform:scaleX(1.130);transform-origin:0 50%;">View</div>
<div class="panel" style="left:1155px;top:117.5px;width:388px;height:75px"><div class="in" style="background:#8a8a8a"></div><div class="hd" style="height:21px;background:linear-gradient(90deg,#e3eaf5,#e6edf7 50%,#ecf1fa)"></div><div class="ln" style="top:26.5px"></div><div class="bd" style="top:28px"></div></div>
<div class="t b" style="left:1167.7px;top:127.1px;font-size:14px;color:#4e4e4e;letter-spacing:0.47px;transform:scaleX(1.130);transform-origin:0 50%;">Sensor</div>
<div class="panel" style="left:1543px;top:117.5px;width:155px;height:75px"><div class="in" style="background:#8a8a8a"></div><div class="hd" style="height:21px;background:linear-gradient(90deg,#e3eaf5,#e6edf7 50%,#ecf1fa)"></div><div class="ln" style="top:26.5px"></div><div class="bd" style="top:28px"></div></div>
<div class="t b" style="left:1555.4px;top:126.9px;font-size:14px;color:#4e4e4e;letter-spacing:0.71px;transform:scaleX(1.130);transform-origin:0 50%;">Generator</div>
<div class="panel" style="left:1698px;top:117.5px;width:192px;height:75px"><div class="in" style="background:#8a8a8a"></div><div class="hd" style="height:21px;background:linear-gradient(90deg,#e3eaf5,#e6edf7 50%,#ecf1fa)"></div><div class="ln" style="top:26.5px"></div><div class="bd" style="top:28px"></div></div>
<div class="t b" style="left:1710.6px;top:126.9px;font-size:14px;color:#4e4e4e;letter-spacing:0.78px;transform:scaleX(1.130);transform-origin:0 50%;">Parameters</div>
<div class="a" style="left:8px;top:150px;width:249px;height:27px;background:#fff;border-top:2px solid #7a7a7a;border-left:2px solid #7a7a7a;border-right:2px solid #f4f4f4;border-bottom:2px solid #f4f4f4;box-shadow:inset 1px 1px 0 #5a5a5a"></div>
<div class="a" style="left:235px;top:153px;width:20px;height:22px;background:#f0f0f0;border-top:1px solid #fff;border-left:1px solid #fff;border-right:2px solid #7a7a7a;border-bottom:2px solid #7a7a7a"></div>
<svg style="left:0;top:0" width="1920" height="1200"><path d="M240.0 162.0h9l-4.5 5z" fill="#000"/></svg>
<div class="t" style="left:14.2px;top:157.6px;font-size:15.5px;color:#111;letter-spacing:0.29px;transform:scaleX(1.130);transform-origin:0 50%;">Contrast</div>
<div class="a" style="left:270px;top:148px;width:842px;height:34px;background:#efefef;border-top:1px solid #9a9a9a;border-left:1px solid #9a9a9a;border-right:1px solid #fff;border-bottom:1px solid #fff"></div>
<div class="t b" style="left:272.0px;top:150.8px;font-size:18px;color:#000;letter-spacing:-0.00px;transform:scaleX(1.118);transform-origin:0 50%;">Color Space: HDTV Rec709 , White Point: D65, EOTF:&nbsp; SDR, BT.1886 w/default gamma...</div>
<div class="a" style="left:1118px;top:151px;width:21px;height:14px;background:#f0f0f0;border-top:1px solid #fff;border-left:1px solid #fff;border-right:2px solid #7a7a7a;border-bottom:2px solid #7a7a7a"></div>
<div class="a" style="left:1118px;top:167px;width:21px;height:14px;background:#f0f0f0;border-top:1px solid #fff;border-left:1px solid #fff;border-right:2px solid #7a7a7a;border-bottom:2px solid #7a7a7a"></div>
<svg style="left:0;top:0" width="1920" height="1200"><path d="M1123.500 160h8l-4-4.500z" fill="#000"/><path d="M1123.500 172h8l-4 4.500z" fill="#000"/></svg>
<div class="a" style="left:1162px;top:147px;width:320px;height:20px;background:#efefef;"></div>
<div class="a" style="left:1165px;top:168px;width:86px;height:18px;background:#efefef;"></div>
<div class="t" style="left:1165.6px;top:148.4px;font-size:15.5px;color:#111;letter-spacing:0.00px;transform:scaleX(1.102);transform-origin:0 50%;">X-Rite i1 DisplayPro, ColorMunki Display</div>
<div class="t" style="left:1167.7px;top:169.6px;font-size:15.5px;color:#111;letter-spacing:-0.00px;transform:scaleX(1.129);transform-origin:0 50%;">Adaptive</div>
<svg style="left:0;top:0" width="1920" height="1200"><path d="M1300 170l14.500 7.500-14.500 7.500z" fill="#78d848" stroke="#58b830" stroke-width=".8"/></svg>
<svg style="left:1504px;top:166px" width="24" height="22" viewBox="0 0 24 22"><path d="M3 3.500l11-2.500c1.500-.3 2 .5 2 1.500v14c0 1-.5 1.800-1.500 2l-10 2c-1.200.2-2-.5-2-1.500V5.500c0-1 .2-1.800 .5-2z" fill="#2c6cd8" stroke="#1c4cae" stroke-width=".8"/><path d="M5 6l9-2v12.500l-9 2z" fill="#b4d4fa"/><path d="M7 11l2.500 3 4-6" stroke="#e8c020" stroke-width="1.800" fill="none"/><path d="M12 14l8-7 1.500 1.500-8 7z" fill="#8090a8"/><path d="M20 7l2-1.500 1 1-1.500 2z" fill="#e03020"/></svg>
<svg style="left:1667px;top:168px" width="24" height="22" viewBox="0 0 24 22"><path d="M3 3.500l11-2.500c1.500-.3 2 .5 2 1.500v14c0 1-.5 1.800-1.500 2l-10 2c-1.200.2-2-.5-2-1.500V5.500c0-1 .2-1.800 .5-2z" fill="#2c6cd8" stroke="#1c4cae" stroke-width=".8"/><path d="M5 6l9-2v12.500l-9 2z" fill="#b4d4fa"/><path d="M7 11l2.500 3 4-6" stroke="#e8c020" stroke-width="1.800" fill="none"/><path d="M12 14l8-7 1.500 1.500-8 7z" fill="#8090a8"/><path d="M20 7l2-1.500 1 1-1.500 2z" fill="#e03020"/></svg>
<div class="a" style="left:1549px;top:147px;width:130px;height:40px;background:#efefef;"></div>
<div class="t" style="left:1550.5px;top:147.9px;font-size:15.5px;color:#111;letter-spacing:0.22px;">GDI</div>
<svg style="left:1667px;top:168px" width="24" height="22" viewBox="0 0 24 22"><path d="M3 3.500l11-2.500c1.500-.3 2 .5 2 1.500v14c0 1-.5 1.800-1.500 2l-10 2c-1.200.2-2-.5-2-1.500V5.500c0-1 .2-1.800 .5-2z" fill="#2c6cd8" stroke="#1c4cae" stroke-width=".8"/><path d="M5 6l9-2v12.500l-9 2z" fill="#b4d4fa"/><path d="M7 11l2.500 3 4-6" stroke="#e8c020" stroke-width="1.800" fill="none"/><path d="M12 14l8-7 1.500 1.500-8 7z" fill="#8090a8"/><path d="M20 7l2-1.500 1 1-1.500 2z" fill="#e03020"/></svg>
<div class="a" style="left:1706px;top:148px;width:105px;height:18px;background:#efefef;"></div>
<div class="a" style="left:1706px;top:168px;width:160px;height:20px;background:#efefef;"></div>
<div class="a" style="left:1712px;top:149px;width:15px;height:15px;background:#fff;border-top:2px solid #7a7a7a;border-left:2px solid #7a7a7a;border-right:1px solid #e8e8e8;border-bottom:1px solid #e8e8e8"></div>
<div class="a" style="left:1712px;top:170px;width:15px;height:15px;background:#f4f4f4;border-top:2px solid #9a9a9a;border-left:2px solid #9a9a9a;border-right:1px solid #f8f8f8;border-bottom:1px solid #f8f8f8"></div>
<div class="t" style="left:1736.4px;top:148.7px;font-size:16px;color:#111;letter-spacing:0.00px;transform:scaleX(1.061);transform-origin:0 50%;">Reference</div>
<div class="t" style="left:1736.4px;top:170.4px;font-size:16px;color:#a4a4a4;letter-spacing:0.00px;transform:scaleX(1.084);transform-origin:0 50%;">XYZ Adjustment</div>
<div class="panel" style="left:3px;top:198.5px;width:1781px;height:276.5px"><div class="in" style="background:#8a8a8a"></div><div class="hd" style="height:16px;background:linear-gradient(90deg,#e3eaf5,#e6edf7 50%,#ecf1fa)"></div><div class="ln" style="top:21.5px"></div><div class="bd" style="top:23px"></div></div>
<div class="t b" style="left:14.2px;top:208.8px;font-size:11.5px;color:#4e4e4e;letter-spacing:0.00px;transform:scaleX(1.123);transform-origin:0 50%;">Contrast</div>
<div class="a" style="left:8px;top:221px;width:1773px;height:250px;background:#f0f0f0;"></div>
<div class="a" style="left:1757px;top:220px;width:21.5px;height:4px;background:#ebf1fa;"></div>
<svg style="left:0;top:0" width="1920" height="1200"><path d="M7.750 224V470.250H1779.250V210.500a6 6 0 0 0-6-6M7.750 224V210.500a6 6 0 0 1 6-6M1757 224.250H1779" fill="none" stroke="#e6e018" stroke-width="1.600"/></svg>
<div class="a" style="left:10px;top:220.5px;width:1747px;height:2px;background:#6e6e6e;"></div>
<div class="a" style="left:10px;top:222px;width:2px;height:244px;background:#6e6e6e;"></div>
<div class="a" style="left:10px;top:465.5px;width:1747px;height:1.5px;background:#fff;"></div>
<div class="a" style="left:12px;top:222.5px;width:1721px;height:28px;background:#f0f0f0;"></div>
<div class="a" style="left:12px;top:249.5px;width:1721px;height:2px;background:#6a6a6a;"></div>
<div class="a" style="left:12px;top:251px;width:19px;height:150px;background:#f0f0f0;"></div>
<div class="a" style="left:30.5px;top:222.5px;width:1.5px;height:179px;background:#6a6a6a;"></div>
<div class="a" style="left:32px;top:251px;width:1701px;height:150px;background:#fff;"></div>
<div class="a" style="left:1189px;top:251px;width:300px;height:150px;background:#dfdfdf;"></div>
<div class="a" style="left:313.5px;top:251px;width:1px;height:150px;background:#d4d4d4;"></div>
<div class="a" style="left:313.5px;top:223px;width:1.5px;height:27px;background:#6a6a6a;"></div>
<div class="a" style="left:605.0px;top:251px;width:1px;height:150px;background:#d4d4d4;"></div>
<div class="a" style="left:605.0px;top:223px;width:1.5px;height:27px;background:#6a6a6a;"></div>
<div class="a" style="left:896.5px;top:251px;width:1px;height:150px;background:#d4d4d4;"></div>
<div class="a" style="left:896.5px;top:223px;width:1.5px;height:27px;background:#6a6a6a;"></div>
<div class="a" style="left:1187.5px;top:251px;width:1px;height:150px;background:#d4d4d4;"></div>
<div class="a" style="left:1187.5px;top:223px;width:1.5px;height:27px;background:#6a6a6a;"></div>
<div class="a" style="left:1489.0px;top:251px;width:1px;height:150px;background:#d4d4d4;"></div>
<div class="a" style="left:1489.0px;top:223px;width:1.5px;height:27px;background:#6a6a6a;"></div>
<div class="a" style="left:32px;top:300.0px;width:1701px;height:1px;background:#d4d4d4;"></div>
<div class="a" style="left:12px;top:300.0px;width:19px;height:1.5px;background:#6a6a6a;"></div>
<div class="a" style="left:32px;top:350.0px;width:1701px;height:1px;background:#d4d4d4;"></div>
<div class="a" style="left:12px;top:350.0px;width:19px;height:1.5px;background:#6a6a6a;"></div>
<div class="a" style="left:32px;top:400.0px;width:1701px;height:1px;background:#d4d4d4;"></div>
<div class="a" style="left:12px;top:400.0px;width:19px;height:1.5px;background:#6a6a6a;"></div>
<div class="a" style="left:12px;top:401px;width:1721px;height:43px;background:#a0a0a0;"></div>
<div class="t b" style="left:155.8px;top:229.8px;font-size:15px;color:#111;letter-spacing:0.00px;transform:scaleX(0.922);transform-origin:0 50%;">Black</div>
<div class="t b" style="left:440.0px;top:229.8px;font-size:15px;color:#111;letter-spacing:0.42px;">White</div>
<div class="t b" style="left:728.5px;top:229.8px;font-size:15px;color:#111;letter-spacing:0.00px;transform:scaleX(0.962);transform-origin:0 50%;">ANSI 1</div>
<div class="t b" style="left:1020.0px;top:229.8px;font-size:15px;color:#111;letter-spacing:0.00px;transform:scaleX(0.972);transform-origin:0 50%;">ANSI 2</div>
<div class="t b" style="left:17.5px;top:258.8px;font-size:15px;color:#000;letter-spacing:0.00px;">x</div>
<div class="t b" style="left:17.5px;top:308.8px;font-size:15px;color:#000;letter-spacing:0.00px;">y</div>
<div class="t b" style="left:17.5px;top:357.8px;font-size:15px;color:#000;letter-spacing:0.00px;">Y</div>
<div class="t" style="right:1608.0px;top:270.1px;font-size:14px;color:#222;transform:scaleX(0.95);transform-origin:100% 50%;">0.3031</div>
<div class="t" style="right:1316.5px;top:270.1px;font-size:14px;color:#222;transform:scaleX(0.95);transform-origin:100% 50%;">0.3038</div>
<div class="t" style="right:1025.0px;top:270.1px;font-size:14px;color:#222;transform:scaleX(0.95);transform-origin:100% 50%;">0.2527</div>
<div class="t" style="right:734.0px;top:270.1px;font-size:14px;color:#222;transform:scaleX(0.95);transform-origin:100% 50%;">0.3039</div>
<div class="t" style="right:432.5px;top:270.1px;font-size:14px;color:#222;transform:scaleX(0.95);transform-origin:100% 50%;">ON/OFF:</div>
<div class="t" style="right:189.0px;top:270.1px;font-size:14px;color:#222;transform:scaleX(0.95);transform-origin:100% 50%;">290:1</div>
<div class="t" style="right:1608.0px;top:320.1px;font-size:14px;color:#222;transform:scaleX(0.95);transform-origin:100% 50%;">0.3184</div>
<div class="t" style="right:1316.5px;top:320.1px;font-size:14px;color:#222;transform:scaleX(0.95);transform-origin:100% 50%;">0.3189</div>
<div class="t" style="right:1025.0px;top:320.1px;font-size:14px;color:#222;transform:scaleX(0.95);transform-origin:100% 50%;">0.2496</div>
<div class="t" style="right:734.0px;top:320.1px;font-size:14px;color:#222;transform:scaleX(0.95);transform-origin:100% 50%;">0.3191</div>
<div class="t" style="right:432.5px;top:320.1px;font-size:14px;color:#222;transform:scaleX(0.95);transform-origin:100% 50%;">ANSI:</div>
<div class="t" style="right:189.0px;top:320.1px;font-size:14px;color:#222;transform:scaleX(0.95);transform-origin:100% 50%;">1323:1</div>
<div class="t" style="right:1608.0px;top:370.1px;font-size:14px;color:#222;transform:scaleX(0.95);transform-origin:100% 50%;">0.910</div>
<div class="t" style="right:1316.5px;top:370.1px;font-size:14px;color:#222;transform:scaleX(0.95);transform-origin:100% 50%;">263.632</div>
<div class="t" style="right:1025.0px;top:370.1px;font-size:14px;color:#222;transform:scaleX(0.95);transform-origin:100% 50%;">0.236</div>
<div class="t" style="right:734.0px;top:370.1px;font-size:14px;color:#222;transform:scaleX(0.95);transform-origin:100% 50%;">311.672</div>
<div class="a" style="left:1733.5px;top:222.5px;width:22px;height:222px;background:#f0f0f0;"></div>
<div class="a" style="left:1755.5px;top:222.5px;width:1.5px;height:245px;background:#fff;"></div>
<div class="a" style="left:1757px;top:225.5px;width:21.5px;height:244px;background:#e9e9e9;"></div>
<div class="a" style="left:1732.5px;top:223px;width:1.5px;height:27px;background:#6a6a6a;"></div>
<div class="a" style="left:12px;top:444px;width:1745px;height:23px;background:#f0f0f0;"></div>
<svg style="left:0;top:0" width="1920" height="1200"><path d="M1739 238h10l-5-7z" fill="#a6a6a6"/><path d="M1739 430h10l-5 7z" fill="#a6a6a6"/><path d="M26 450v10l-8-5z" fill="#a6a6a6"/><path d="M1719 450v10l8-5z" fill="#a6a6a6"/></svg>
<div class="panel" style="left:1785px;top:199px;width:105px;height:129px"><div class="in" style="background:#8a8a8a"></div><div class="hd" style="height:20px;background:linear-gradient(90deg,#e3eaf5,#e6edf7 50%,#ecf1fa)"></div><div class="ln" style="top:25.5px"></div><div class="bd" style="top:27px"></div></div>
<div class="t b" style="left:1797.5px;top:208.1px;font-size:14px;color:#4e4e4e;letter-spacing:0.55px;transform:scaleX(1.130);transform-origin:0 50%;">Display</div>
<div class="a" style="left:1797px;top:225px;width:84px;height:18px;background:#efefef;"></div>
<svg style="left:1798px;top:226px" width="16" height="16" viewBox="0 0 16 16"><circle cx="8" cy="8" r="6.300" fill="#f4f4f4"/><path d="M3.400 12.600A6.500 6.500 0 0 1 12.600 3.400" fill="none" stroke="#8e8e8e" stroke-width="1.900"/><path d="M12.800 3.700A6.300 6.300 0 0 1 3.700 12.800" fill="none" stroke="#f6f6f6" stroke-width="1.300"/></svg>
<div class="t" style="left:1821.0px;top:228.0px;font-size:16px;color:#b4b4b4;letter-spacing:0.00px;transform:scaleX(1.085);transform-origin:0 50%;">Sensor</div>
<div class="a" style="left:1797px;top:245px;width:84px;height:18px;background:#efefef;"></div>
<svg style="left:1798px;top:246px" width="16" height="16" viewBox="0 0 16 16"><circle cx="8" cy="8" r="6.300" fill="#fff"/><path d="M3.400 12.600A6.500 6.500 0 0 1 12.600 3.400" fill="none" stroke="#5e5e5e" stroke-width="1.900"/><path d="M12.800 3.700A6.300 6.300 0 0 1 3.700 12.800" fill="none" stroke="#f6f6f6" stroke-width="1.300"/></svg>
<div class="t" style="left:1821.0px;top:248.0px;font-size:16px;color:#111;letter-spacing:-0.01px;transform:scaleX(0.880);transform-origin:0 50%;">RGB</div>
<div class="a" style="left:1797px;top:265px;width:84px;height:18px;background:#efefef;"></div>
<svg style="left:1798px;top:266px" width="16" height="16" viewBox="0 0 16 16"><circle cx="8" cy="8" r="6.300" fill="#fff"/><path d="M3.400 12.600A6.500 6.500 0 0 1 12.600 3.400" fill="none" stroke="#5e5e5e" stroke-width="1.900"/><path d="M12.800 3.700A6.300 6.300 0 0 1 3.700 12.800" fill="none" stroke="#f6f6f6" stroke-width="1.300"/></svg>
<div class="t" style="left:1821.0px;top:267.5px;font-size:16px;color:#111;letter-spacing:0.00px;transform:scaleX(0.900);transform-origin:0 50%;">XYZ</div>
<div class="a" style="left:1797px;top:285px;width:84px;height:18px;background:#efefef;"></div>
<svg style="left:1798px;top:286px" width="16" height="16" viewBox="0 0 16 16"><circle cx="8" cy="8" r="6.300" fill="#fff"/><path d="M3.400 12.600A6.500 6.500 0 0 1 12.600 3.400" fill="none" stroke="#5e5e5e" stroke-width="1.900"/><path d="M12.800 3.700A6.300 6.300 0 0 1 3.700 12.800" fill="none" stroke="#f6f6f6" stroke-width="1.300"/></svg>
<div class="t" style="left:1821.0px;top:287.5px;font-size:16px;color:#111;letter-spacing:0.00px;transform:scaleX(1.083);transform-origin:0 50%;">xyz</div>
<div class="a" style="left:1797px;top:303.5px;width:84px;height:18px;background:#efefef;"></div>
<svg style="left:1798px;top:304.5px" width="16" height="16" viewBox="0 0 16 16"><circle cx="8" cy="8" r="6.300" fill="#fff"/><path d="M3.400 12.600A6.500 6.500 0 0 1 12.600 3.400" fill="none" stroke="#5e5e5e" stroke-width="1.900"/><path d="M12.800 3.700A6.300 6.300 0 0 1 3.700 12.800" fill="none" stroke="#f6f6f6" stroke-width="1.300"/><circle cx="8" cy="8" r="2.300" fill="#000"/></svg>
<div class="t" style="left:1821.0px;top:306.5px;font-size:16px;color:#111;letter-spacing:0.16px;">xyY</div>
<div class="a" style="left:1786px;top:330px;width:103px;height:38px;background:#f0f0f0;border-top:1px solid #fff;border-left:1px solid #fff;border-right:2px solid #8a8a8a;border-bottom:2px solid #8a8a8a"></div>
<div class="a" style="left:1788px;top:332px;width:98px;height:34px;background:#fff;"></div>
<div class="a" style="left:1786px;top:368px;width:103px;height:37px;background:#f0f0f0;border-top:1px solid #fff;border-left:1px solid #fff;border-right:2px solid #8a8a8a;border-bottom:2px solid #8a8a8a"></div>
<div class="a" style="left:1786px;top:405px;width:103px;height:38px;background:#f0f0f0;border-top:1px solid #fff;border-left:1px solid #fff;border-right:2px solid #8a8a8a;border-bottom:2px solid #8a8a8a"></div>
<div class="a" style="left:1792.5px;top:334px;width:40px;height:32px;background:#fff;"></div>
<div class="a" style="left:1792.5px;top:334.0px;width:13.4px;height:10.7px;background:#000;"></div>
<div class="a" style="left:1819.16px;top:334.0px;width:13.4px;height:10.7px;background:#000;"></div>
<div class="a" style="left:1805.83px;top:344.67px;width:13.4px;height:10.7px;background:#000;"></div>
<div class="a" style="left:1792.5px;top:355.34px;width:13.4px;height:10.7px;background:#000;"></div>
<div class="a" style="left:1819.16px;top:355.34px;width:13.4px;height:10.7px;background:#000;"></div>
<div class="t" style="left:1849.0px;top:344.0px;font-size:16px;color:#111;letter-spacing:0.00px;transform:scaleX(0.937);transform-origin:0 50%;">Go</div>
<svg style="left:1793px;top:370px" width="38" height="34" viewBox="0 0 38 34"><defs><linearGradient id="gbin" x1="0" y1="0" x2="1" y2="0"><stop offset="0" stop-color="#a8dcf8"/><stop offset=".5" stop-color="#58b4ec"/><stop offset="1" stop-color="#88ccf4"/></linearGradient></defs><path d="M2 5l34-3-4 27c-8 4-18 4-24 1z" fill="url(#gbin)" stroke="#4898d0" stroke-width=".8"/><ellipse cx="19" cy="4" rx="17" ry="2.500" fill="#d0ecfc" stroke="#70b8e8" stroke-width=".6"/><circle cx="22" cy="17" r="8.500" fill="#e8f8e8" opacity=".7"/><path d="M17 13a7 7 0 0 1 11 1l2-1-1 6-5-2 2-1a4.500 4.500 0 0 0-7-1z" fill="#28a830"/><path d="M27 21a7 7 0 0 1-11-1l-2 1 1-6 5 2-2 1a4.500 4.500 0 0 0 7 1z" fill="#28a830"/></svg>
<div class="t" style="left:1834.0px;top:379.0px;font-size:16px;color:#111;letter-spacing:0.00px;transform:scaleX(1.103);transform-origin:0 50%;">Delete</div>
<div class="a" style="left:1793px;top:419px;width:5px;height:5px;background:#000;"></div>
<div class="a" style="left:1798px;top:424px;width:5px;height:5px;background:#000;"></div>
<div class="t" style="left:1825.0px;top:416.5px;font-size:16px;color:#111;letter-spacing:0.05px;">ANSI</div>
<div class="a" style="left:1792px;top:447px;width:71px;height:23px;background:#f0f0f0;"></div>
<div class="a" style="left:1795px;top:451px;width:15px;height:15px;background:#fff;border-top:2px solid #7a7a7a;border-left:2px solid #7a7a7a;border-right:1px solid #e8e8e8;border-bottom:1px solid #e8e8e8"></div>
<div class="t" style="left:1816.0px;top:450.5px;font-size:16px;color:#111;letter-spacing:0.00px;transform:scaleX(1.106);transform-origin:0 50%;">Edit</div>
<div class="panel" style="left:3px;top:480px;width:478px;height:580.7px"><div class="in" style="background:#8a8a8a"></div><div class="hd" style="height:20.5px;background:linear-gradient(90deg,#e3eaf5,#e6edf7 50%,#ecf1fa)"></div><div class="ln" style="top:26.0px"></div><div class="bd" style="top:27.5px"></div></div>
<div class="t b" style="left:15.3px;top:489.1px;font-size:14px;color:#4e4e4e;letter-spacing:0.51px;transform:scaleX(1.130);transform-origin:0 50%;">Selected color</div>
<div class="a" style="left:19px;top:511px;width:141px;height:18px;background:#efefef;"></div>
<div class="a" style="left:288px;top:509px;width:159px;height:18px;background:#efefef;"></div>
<div class="t" style="left:22.5px;top:512.9px;font-size:15.5px;color:#111;letter-spacing:0.37px;">RGB Levels</div>
<div class="t" style="left:301.7px;top:510.4px;font-size:15.5px;color:#111;letter-spacing:0.02px;transform:scaleX(1.130);transform-origin:0 50%;">Current Measure</div>
<div class="a" style="left:17.5px;top:541.5px;width:250px;height:107px;background:#eeeeee;"></div>
<svg style="left:0;top:0" width="1920" height="1200"><defs><linearGradient id="cR" x1="0" y1="0" x2="1" y2="0"><stop offset="0" stop-color="#fff4f4"/><stop offset=".12" stop-color="#ffd0d0"/><stop offset=".5" stop-color="#ff0000"/><stop offset="1" stop-color="#200000"/></linearGradient><linearGradient id="cG" x1="0" y1="0" x2="1" y2="0"><stop offset="0" stop-color="#f4fff4"/><stop offset=".12" stop-color="#d0ffd0"/><stop offset=".5" stop-color="#00ff00"/><stop offset="1" stop-color="#002000"/></linearGradient><linearGradient id="cB" x1="0" y1="0" x2="1" y2="0"><stop offset="0" stop-color="#f4f4ff"/><stop offset=".12" stop-color="#d0d0ff"/><stop offset=".5" stop-color="#0000ff"/><stop offset="1" stop-color="#000020"/></linearGradient><linearGradient id="cY" x1="0" y1="0" x2="1" y2="0"><stop offset="0" stop-color="#fffef0"/><stop offset=".12" stop-color="#fff4c0"/><stop offset=".5" stop-color="#ffd800"/><stop offset="1" stop-color="#201800"/></linearGradient></defs><path d="M17.500 597.500h250" stroke="#909090" stroke-width="1" stroke-dasharray="2 2"/><path d="M20.4 596.2V643H77.3V596.2z" fill="url(#cR)"/><ellipse cx="48.849999999999994" cy="596.2" rx="28.45" ry="5.800" fill="#a00000" stroke="#000" stroke-width=".8"/><path d="M84.2 592.4V643H141V592.4z" fill="url(#cG)"/><ellipse cx="112.6" cy="592.4" rx="28.4" ry="5.800" fill="#00a000" stroke="#000" stroke-width=".8"/><path d="M148 588.6V643H205V588.6z" fill="url(#cB)"/><ellipse cx="176.5" cy="588.6" rx="28.5" ry="5.800" fill="#0000a0" stroke="#000" stroke-width=".8"/><path d="M211.3 606.4V643H267.5V606.4z" fill="url(#cY)"/><ellipse cx="239.4" cy="606.4" rx="28.099999999999994" ry="5.800" fill="#b88800" stroke="#000" stroke-width=".8"/><rect x="17.500" y="642" width="250" height="6.600" fill="#000"/></svg>
<div class="t b" style="left:30.0px;top:575.4px;font-size:12.5px;color:#111;letter-spacing:0.36px;">98.9%</div>
<div class="t b" style="left:90.6px;top:571.6px;font-size:12.5px;color:#111;letter-spacing:0.20px;">105.3%</div>
<div class="t b" style="left:154.4px;top:567.8px;font-size:12.5px;color:#111;letter-spacing:0.00px;transform:scaleX(1.053);transform-origin:0 50%;">114.6%</div>
<div class="t b" style="left:220.0px;top:585.6px;font-size:12.5px;color:#222;letter-spacing:0.34px;">dE 2.4</div>
<div class="a" style="left:20px;top:666.5px;width:120px;height:92.5px;background:#0088ae;"></div>
<div class="a" style="left:140px;top:666.5px;width:120px;height:92.5px;background:#0085a3;"></div>
<div class="t b" style="left:40.8px;top:668.7px;font-size:16px;color:#17395c;letter-spacing:0.00px;transform:scaleX(1.113);transform-origin:0 50%;">0,136,174</div>
<div class="t b" style="left:44.7px;top:688.5px;font-size:16px;color:#17395c;letter-spacing:0.00px;transform:scaleX(1.068);transform-origin:0 50%;">Measure</div>
<div class="t b" style="left:160.8px;top:668.7px;font-size:16px;color:#17395c;letter-spacing:0.00px;transform:scaleX(1.113);transform-origin:0 50%;">0,133,163</div>
<div class="t b" style="left:159.5px;top:688.5px;font-size:16px;color:#17395c;letter-spacing:0.44px;">Reference</div>
<div class="a" style="left:21px;top:779px;width:54px;height:18px;background:#efefef;"></div>
<div class="t" style="left:22.5px;top:778.6px;font-size:15.5px;color:#111;letter-spacing:0.27px;transform:scaleX(1.130);transform-origin:0 50%;">Target</div>
<div class="a" style="left:62.5px;top:797.5px;width:145px;height:111.5px;background:#000;"></div>
<div class="a" style="left:63.5px;top:798.5px;width:143px;height:109.5px;background:conic-gradient(from 0deg at 50% 50%,#4cff00 0deg,#b4e000 30deg,#ffc400 52deg,#ff6000 70deg,#ff0000 90deg,#ff0050 112deg,#ff0090 128deg,#c000b0 150deg,#8c00c8 180deg,#3000f0 215deg,#0000ff 232deg,#0040e0 250deg,#0080b4 270deg,#00c09c 290deg,#00ff80 308deg,#20ff40 335deg,#4cff00 360deg);"></div>
<svg style="left:62px;top:797px" width="146" height="113" viewBox="0 0 146 113"><defs><linearGradient id="tgh" x1="0" y1="0" x2="1" y2="0"><stop offset="0" stop-color="#00c8a0"/><stop offset=".1" stop-color="#00e070"/><stop offset=".45" stop-color="#50ff00"/><stop offset=".78" stop-color="#e8c800"/><stop offset="1" stop-color="#ff7000"/></linearGradient><linearGradient id="tgb" x1="0" y1="0" x2="1" y2="0"><stop offset="0" stop-color="#0000e8"/><stop offset=".2" stop-color="#1000ff"/><stop offset=".5" stop-color="#8000c8"/><stop offset=".85" stop-color="#f00090"/><stop offset="1" stop-color="#ff0060"/></linearGradient><linearGradient id="tgl" x1="0" y1="0" x2="0" y2="1"><stop offset="0" stop-color="#00e890"/><stop offset=".5" stop-color="#0080b0"/><stop offset="1" stop-color="#0000f0"/></linearGradient><linearGradient id="tgr" x1="0" y1="0" x2="0" y2="1"><stop offset="0" stop-color="#ff8000"/><stop offset=".5" stop-color="#ff0000"/><stop offset="1" stop-color="#ff0080"/></linearGradient></defs><rect x="22.500" y="17.500" width="101" height="78" rx="10" fill="#0088a4" stroke="#fff" stroke-width="1.100"/><path d="M19 56h109M73.300 17v79" stroke="#000" stroke-width="1.200" stroke-dasharray="3 2"/><path d="M19 56h109M73.300 17v79" stroke="#fff" stroke-width="1.200" stroke-dasharray="2 3" stroke-dashoffset="2" opacity=".9"/><ellipse cx="73" cy="56" rx="26.400" ry="19.800" fill="none" stroke="#000" stroke-width="1.200" stroke-dasharray="3 2"/><ellipse cx="73" cy="56" rx="26.400" ry="19.800" fill="none" stroke="#fff" stroke-width="1.200" stroke-dasharray="2 3" stroke-dashoffset="2" opacity=".9"/><path d="M91 36l7-5 6 5-7 5z" fill="#00f000" stroke="#0a6a0a" stroke-width=".5"/><path d="M97 43l6-6 2 3-5 7z" fill="#0808f0" stroke="#202080" stroke-width=".5"/><path d="M107.500 34.500L73 58.500" stroke="#b03800" stroke-width="2"/><path d="M107 33.800L72.500 57.800" stroke="#ffd800" stroke-width="1.200"/><path d="M67 62.500l7-10 2 5z" fill="#ffe000"/><path d="M67 62.500l9-5 4 2z" fill="#b02800"/><path d="M104 36.500l5.500-4-1.500 5z" fill="#e02000"/></svg>
<div class="a" style="left:275.5px;top:538px;width:191px;height:511px;background:#fff;"></div>
<div class="a" style="left:275.5px;top:538px;width:2px;height:511px;background:#757575;"></div>
<div class="a" style="left:275.5px;top:538px;width:190px;height:1.8px;background:#757575;"></div>
<div class="a" style="left:278px;top:540px;width:63.5px;height:509px;background:#f0f0f0;"></div>
<div class="a" style="left:341px;top:540px;width:1.5px;height:509px;background:#808080;"></div>
<div class="a" style="left:443px;top:540px;width:23px;height:509px;background:#f0f0f0;"></div>
<div class="a" style="left:465px;top:540px;width:1.5px;height:509px;background:#fff;"></div>
<div class="t b" style="left:283.5px;top:547.1px;font-size:15px;color:#111;letter-spacing:0.00px;">Y cd/ml</div>
<div class="t" style="right:1478.7px;top:546.6px;font-size:14px;color:#222;transform:scaleX(0.95);transform-origin:100% 50%;">58.410</div>
<div class="a" style="left:278px;top:567.8px;width:63px;height:1.5px;background:#8a8a8a;"></div>
<div class="a" style="left:342.5px;top:567.8px;width:100.5px;height:1px;background:#d8d8d8;"></div>
<div class="t b" style="left:293.5px;top:575.9px;font-size:15px;color:#111;letter-spacing:0.00px;">Y ftL</div>
<div class="t" style="right:1478.7px;top:575.4px;font-size:14px;color:#222;transform:scaleX(0.95);transform-origin:100% 50%;">17.0491</div>
<div class="a" style="left:278px;top:596.5px;width:63px;height:1.5px;background:#8a8a8a;"></div>
<div class="a" style="left:342.5px;top:596.5px;width:100.5px;height:1px;background:#d8d8d8;"></div>
<div class="t b" style="left:302.4px;top:604.6px;font-size:15px;color:#111;letter-spacing:0.00px;">T°</div>
<div class="t" style="right:1478.7px;top:604.2px;font-size:14px;color:#222;transform:scaleX(0.95);transform-origin:100% 50%;">&gt; 12000</div>
<div class="a" style="left:342.5px;top:626.3px;width:100.5px;height:28.8px;background:#dfdfdf;"></div>
<div class="a" style="left:278px;top:625.3px;width:63px;height:1.5px;background:#8a8a8a;"></div>
<div class="a" style="left:342.5px;top:625.3px;width:100.5px;height:1px;background:#d8d8d8;"></div>
<div class="t b" style="left:305.0px;top:633.4px;font-size:15px;color:#111;letter-spacing:0.00px;">X</div>
<div class="t" style="right:1478.7px;top:632.9px;font-size:14px;color:#222;transform:scaleX(0.95);transform-origin:100% 50%;">45.19</div>
<div class="a" style="left:342.5px;top:655.0px;width:100.5px;height:28.8px;background:#dfdfdf;"></div>
<div class="a" style="left:278px;top:654.0px;width:63px;height:1.5px;background:#8a8a8a;"></div>
<div class="a" style="left:342.5px;top:654.0px;width:100.5px;height:1px;background:#d8d8d8;"></div>
<div class="t b" style="left:305.0px;top:662.1px;font-size:15px;color:#111;letter-spacing:0.00px;">Y</div>
<div class="t" style="right:1478.7px;top:661.7px;font-size:14px;color:#222;transform:scaleX(0.95);transform-origin:100% 50%;">58.41</div>
<div class="a" style="left:342.5px;top:683.8px;width:100.5px;height:28.8px;background:#dfdfdf;"></div>
<div class="a" style="left:278px;top:682.8px;width:63px;height:1.5px;background:#8a8a8a;"></div>
<div class="a" style="left:342.5px;top:682.8px;width:100.5px;height:1px;background:#d8d8d8;"></div>
<div class="t b" style="left:305.4px;top:690.9px;font-size:15px;color:#111;letter-spacing:0.00px;">Z</div>
<div class="t" style="right:1478.7px;top:690.4px;font-size:14px;color:#222;transform:scaleX(0.95);transform-origin:100% 50%;">119.39</div>
<div class="a" style="left:278px;top:711.6px;width:63px;height:1.5px;background:#8a8a8a;"></div>
<div class="a" style="left:342.5px;top:711.6px;width:100.5px;height:1px;background:#d8d8d8;"></div>
<div class="t b" style="left:304.6px;top:719.7px;font-size:15px;color:#111;letter-spacing:0.00px;">R</div>
<div class="t" style="right:1478.7px;top:719.2px;font-size:14px;color:#222;transform:scaleX(0.95);transform-origin:100% 50%;">-2.86</div>
<div class="a" style="left:278px;top:740.3px;width:63px;height:1.5px;background:#8a8a8a;"></div>
<div class="a" style="left:342.5px;top:740.3px;width:100.5px;height:1px;background:#d8d8d8;"></div>
<div class="t b" style="left:304.2px;top:748.4px;font-size:15px;color:#111;letter-spacing:0.00px;">G</div>
<div class="t" style="right:1478.7px;top:748.0px;font-size:14px;color:#222;transform:scaleX(0.95);transform-origin:100% 50%;">70.74</div>
<div class="a" style="left:278px;top:769.1px;width:63px;height:1.5px;background:#8a8a8a;"></div>
<div class="a" style="left:342.5px;top:769.1px;width:100.5px;height:1px;background:#d8d8d8;"></div>
<div class="t b" style="left:304.6px;top:777.2px;font-size:15px;color:#111;letter-spacing:0.00px;">B</div>
<div class="t" style="right:1478.7px;top:776.7px;font-size:14px;color:#222;transform:scaleX(0.95);transform-origin:100% 50%;">116.80</div>
<div class="a" style="left:342.5px;top:798.8px;width:100.5px;height:28.8px;background:#dfdfdf;"></div>
<div class="a" style="left:278px;top:797.8px;width:63px;height:1.5px;background:#8a8a8a;"></div>
<div class="a" style="left:342.5px;top:797.8px;width:100.5px;height:1px;background:#d8d8d8;"></div>
<div class="t b" style="left:305.8px;top:805.9px;font-size:15px;color:#111;letter-spacing:0.00px;">x</div>
<div class="t" style="right:1478.7px;top:805.5px;font-size:14px;color:#222;transform:scaleX(0.95);transform-origin:100% 50%;">0.203</div>
<div class="a" style="left:342.5px;top:827.6px;width:100.5px;height:28.8px;background:#dfdfdf;"></div>
<div class="a" style="left:278px;top:826.6px;width:63px;height:1.5px;background:#8a8a8a;"></div>
<div class="a" style="left:342.5px;top:826.6px;width:100.5px;height:1px;background:#d8d8d8;"></div>
<div class="t b" style="left:305.8px;top:834.7px;font-size:15px;color:#111;letter-spacing:0.00px;">y</div>
<div class="t" style="right:1478.7px;top:834.2px;font-size:14px;color:#222;transform:scaleX(0.95);transform-origin:100% 50%;">0.262</div>
<div class="a" style="left:342.5px;top:856.4px;width:100.5px;height:28.8px;background:#dfdfdf;"></div>
<div class="a" style="left:278px;top:855.4px;width:63px;height:1.5px;background:#8a8a8a;"></div>
<div class="a" style="left:342.5px;top:855.4px;width:100.5px;height:1px;background:#d8d8d8;"></div>
<div class="t b" style="left:305.0px;top:863.5px;font-size:15px;color:#111;letter-spacing:0.00px;">Y</div>
<div class="t" style="right:1478.7px;top:863.0px;font-size:14px;color:#222;transform:scaleX(0.95);transform-origin:100% 50%;">58.410</div>
<div class="a" style="left:278px;top:884.1px;width:63px;height:1.5px;background:#8a8a8a;"></div>
<div class="a" style="left:342.5px;top:884.1px;width:100.5px;height:1px;background:#d8d8d8;"></div>
<div class="t b" style="left:305.8px;top:892.2px;font-size:15px;color:#111;letter-spacing:0.00px;">x</div>
<div class="t" style="right:1478.7px;top:891.8px;font-size:14px;color:#222;transform:scaleX(0.95);transform-origin:100% 50%;">0.203</div>
<div class="a" style="left:278px;top:912.9px;width:63px;height:1.5px;background:#8a8a8a;"></div>
<div class="a" style="left:342.5px;top:912.9px;width:100.5px;height:1px;background:#d8d8d8;"></div>
<div class="t b" style="left:305.8px;top:921.0px;font-size:15px;color:#111;letter-spacing:0.00px;">y</div>
<div class="t" style="right:1478.7px;top:920.5px;font-size:14px;color:#222;transform:scaleX(0.95);transform-origin:100% 50%;">0.262</div>
<div class="a" style="left:278px;top:941.6px;width:63px;height:1.5px;background:#8a8a8a;"></div>
<div class="a" style="left:342.5px;top:941.6px;width:100.5px;height:1px;background:#d8d8d8;"></div>
<div class="t b" style="left:306.2px;top:949.7px;font-size:15px;color:#111;letter-spacing:0.00px;">z</div>
<div class="t" style="right:1478.7px;top:949.3px;font-size:14px;color:#222;transform:scaleX(0.95);transform-origin:100% 50%;">0.535</div>
<div class="a" style="left:342.5px;top:971.4px;width:100.5px;height:28.8px;background:#dfdfdf;"></div>
<div class="a" style="left:278px;top:970.4px;width:63px;height:1.5px;background:#8a8a8a;"></div>
<div class="a" style="left:342.5px;top:970.4px;width:100.5px;height:1px;background:#d8d8d8;"></div>
<div class="t b" style="left:305.4px;top:978.5px;font-size:15px;color:#111;letter-spacing:0.00px;">L</div>
<div class="t" style="right:1478.7px;top:978.0px;font-size:14px;color:#222;transform:scaleX(0.95);transform-origin:100% 50%;">54.19</div>
<div class="a" style="left:342.5px;top:1000.2px;width:100.5px;height:28.8px;background:#dfdfdf;"></div>
<div class="a" style="left:278px;top:999.2px;width:63px;height:1.5px;background:#8a8a8a;"></div>
<div class="a" style="left:342.5px;top:999.2px;width:100.5px;height:1px;background:#d8d8d8;"></div>
<div class="t b" style="left:305.8px;top:1007.3px;font-size:15px;color:#111;letter-spacing:0.00px;">a</div>
<div class="t" style="right:1478.7px;top:1006.8px;font-size:14px;color:#222;transform:scaleX(0.95);transform-origin:100% 50%;">-20.06</div>
<div class="a" style="left:342.5px;top:1028.9px;width:100.5px;height:20.1px;background:#dfdfdf;"></div>
<div class="a" style="left:278px;top:1027.9px;width:63px;height:1.5px;background:#8a8a8a;"></div>
<div class="a" style="left:342.5px;top:1027.9px;width:100.5px;height:1px;background:#d8d8d8;"></div>
<div class="t b" style="left:305.4px;top:1036.0px;font-size:15px;color:#111;letter-spacing:0.00px;">b</div>
<div class="t" style="right:1478.7px;top:1035.6px;font-size:14px;color:#222;transform:scaleX(0.95);transform-origin:100% 50%;">-28.26</div>
<div class="a" style="left:454px;top:562px;width:2px;height:343px;background:#808080;"></div>
<div class="a" style="left:275.5px;top:1049px;width:191px;height:9px;background:#ebebeb;"></div>
<div class="panel" style="left:485.5px;top:480px;width:1404.5px;height:580.7px"><div class="in" style="background:#8a8a8a"></div><div class="hd" style="height:20.5px;background:linear-gradient(90deg,#e3eaf5,#e6edf7 50%,#ecf1fa)"></div><div class="ln" style="top:26.0px"></div><div class="bd" style="top:27.5px"></div></div>
<div class="t b" style="left:498.0px;top:489.4px;font-size:14px;color:#4e4e4e;letter-spacing:0.80px;transform:scaleX(1.130);transform-origin:0 50%;">Information</div>
<div class="a" style="left:495px;top:512px;width:377px;height:27px;background:#fff;border-top:2px solid #7a7a7a;border-left:2px solid #7a7a7a;border-right:2px solid #f4f4f4;border-bottom:2px solid #f4f4f4;box-shadow:inset 1px 1px 0 #5a5a5a"></div>
<div class="a" style="left:850px;top:515px;width:20px;height:22px;background:#f0f0f0;border-top:1px solid #fff;border-left:1px solid #fff;border-right:2px solid #7a7a7a;border-bottom:2px solid #7a7a7a"></div>
<svg style="left:0;top:0" width="1920" height="1200"><path d="M855.0 524.0h9l-4.5 5z" fill="#000"/></svg>
<div class="t" style="left:501.7px;top:519.4px;font-size:15.5px;color:#111;letter-spacing:0.26px;">RGB Levels</div>
<div class="a" style="left:498px;top:549px;width:1388px;height:501px;background:#fff;"></div>
<div class="a" style="left:498px;top:1047.7px;width:1388px;height:1px;background:#e6e6e6;"></div>
<div class="a" style="left:1884.3px;top:549px;width:1px;height:500px;background:#e6e6e6;"></div>
<div class="a" style="left:498px;top:549px;width:1388px;height:2px;background:#808080;"></div>
<div class="a" style="left:498px;top:549px;width:2px;height:497px;background:#808080;"></div>
<div class="a" style="left:500px;top:551px;width:1385px;height:2px;background:#404040;"></div>
<div class="a" style="left:500px;top:551px;width:2px;height:495px;background:#404040;"></div>
<div class="a" style="left:502px;top:553px;width:1381px;height:492.5px;background:linear-gradient(90deg,#232323 0%,#fdfdfd 100%);"></div>
<svg style="left:0;top:0" width="1920" height="1200"><path d="M640.5 553V1045.5" stroke="#0e4a4a" stroke-width="1.500"/><path d="M778.5 553V1045.5" stroke="#0e4a4a" stroke-width="1.500"/><path d="M916.5 553V1045.5" stroke="#0e4a4a" stroke-width="1.500"/><path d="M1054.5 553V1045.5" stroke="#0e4a4a" stroke-width="1.500"/><path d="M1192.5 553V1045.5" stroke="#0e4a4a" stroke-width="1.500"/><path d="M1330.5 553V1045.5" stroke="#0e4a4a" stroke-width="1.500"/><path d="M1468.5 553V1045.5" stroke="#0e4a4a" stroke-width="1.500"/><path d="M1606.5 553V1045.5" stroke="#0e4a4a" stroke-width="1.500"/><path d="M1744.5 553V1045.5" stroke="#0e4a4a" stroke-width="1.500"/><path d="M502.8 553V1045.5" stroke="#0e4a4a" stroke-width="1.600"/><path d="M502 578.3H1883" stroke="#0e4a4a" stroke-width="1.500"/><path d="M502 602.9H1883" stroke="#0e4a4a" stroke-width="1.500"/><path d="M502 627.6H1883" stroke="#0e4a4a" stroke-width="1.500"/><path d="M502 652.2H1883" stroke="#0e4a4a" stroke-width="1.500"/><path d="M502 701.5H1883" stroke="#0e4a4a" stroke-width="1.500"/><path d="M502 726.2H1883" stroke="#0e4a4a" stroke-width="1.500"/><path d="M502 750.8H1883" stroke="#0e4a4a" stroke-width="1.500"/><path d="M502 775.5H1883" stroke="#0e4a4a" stroke-width="1.500"/><path d="M502 849.4H1883" stroke="#0e4a4a" stroke-width="1.500"/><path d="M502 898H1883" stroke="#0e4a4a" stroke-width="1.500"/><path d="M502 948H1883" stroke="#0e4a4a" stroke-width="1.500"/><path d="M502 996.7H1883" stroke="#0e4a4a" stroke-width="1.500"/></svg>
<svg style="left:0;top:0" width="1920" height="1200"><rect x="502" y="672" width="3.500" height="9" fill="#f0f0f0"/><polyline points="640.5,686.8 778.5,686.8 916.5,688.0 1054.5,688.0 1192.5,688.0 1330.5,688.0 1468.5,687.0 1606.5,687.0 1744.5,687.0 1882.5,687.0" fill="none" stroke="#ff0000" stroke-width="2.4"/><rect x="635.5" y="681.8" width="10.0" height="10" fill="#ff0000"/><rect x="773.5" y="681.8" width="10.0" height="10" fill="#ff0000"/><rect x="911.5" y="683.0" width="10.0" height="10" fill="#ff0000"/><rect x="1049.5" y="683.0" width="10.0" height="10" fill="#ff0000"/><rect x="1187.5" y="683.0" width="10.0" height="10" fill="#ff0000"/><rect x="1325.5" y="683.0" width="10.0" height="10" fill="#ff0000"/><rect x="1463.5" y="682.0" width="10.0" height="10" fill="#ff0000"/><rect x="1601.5" y="682.0" width="10.0" height="10" fill="#ff0000"/><rect x="1739.5" y="682.0" width="10.0" height="10" fill="#ff0000"/><rect x="1877.5" y="682.0" width="5.5" height="10" fill="#ff0000"/><polyline points="640.5,676.3 778.5,676.3 916.5,675.0 1054.5,675.5 1192.5,675.5 1330.5,675.0 1468.5,675.0 1606.5,675.0 1744.5,676.5 1882.5,676.5" fill="none" stroke="#00ff00" stroke-width="2.4"/><rect x="635.5" y="671.3" width="10.0" height="10" fill="#00ff00"/><rect x="773.5" y="671.3" width="10.0" height="10" fill="#00ff00"/><rect x="911.5" y="670.0" width="10.0" height="10" fill="#00ff00"/><rect x="1049.5" y="670.5" width="10.0" height="10" fill="#00ff00"/><rect x="1187.5" y="670.5" width="10.0" height="10" fill="#00ff00"/><rect x="1325.5" y="670.0" width="10.0" height="10" fill="#00ff00"/><rect x="1463.5" y="670.0" width="10.0" height="10" fill="#00ff00"/><rect x="1601.5" y="670.0" width="10.0" height="10" fill="#00ff00"/><rect x="1739.5" y="671.5" width="10.0" height="10" fill="#00ff00"/><rect x="1877.5" y="671.5" width="5.5" height="10" fill="#00ff00"/><polyline points="640.5,651.2 778.5,651.2 916.5,651.2 1054.5,652.3 1192.5,651.5 1330.5,651.2 1468.5,651.2 1606.5,651.2 1744.5,652.3 1882.5,652.3" fill="none" stroke="#0000ff" stroke-width="2.4"/><rect x="635.5" y="646.2" width="10.0" height="10" fill="#0000ff"/><rect x="773.5" y="646.2" width="10.0" height="10" fill="#0000ff"/><rect x="911.5" y="646.2" width="10.0" height="10" fill="#0000ff"/><rect x="1049.5" y="647.3" width="10.0" height="10" fill="#0000ff"/><rect x="1187.5" y="646.5" width="10.0" height="10" fill="#0000ff"/><rect x="1325.5" y="646.2" width="10.0" height="10" fill="#0000ff"/><rect x="1463.5" y="646.2" width="10.0" height="10" fill="#0000ff"/><rect x="1601.5" y="646.2" width="10.0" height="10" fill="#0000ff"/><rect x="1739.5" y="647.3" width="10.0" height="10" fill="#0000ff"/><rect x="1877.5" y="647.3" width="5.5" height="10" fill="#0000ff"/><path d="M1192 677.500H1606.500" stroke="#000" stroke-width="1.500"/><path d="M502 677.300H1606.500" stroke="#fff" stroke-width="1.500" stroke-dasharray="3.500 3"/><polyline points="640.5,1009.5 778.5,982.5 916.5,957.4 1054.5,933.7 1192.5,909.4 1330.5,887.6 1468.5,866.2 1606.5,846.4 1744.5,829.5 1882.5,815.6" fill="none" stroke="#ff00ff" stroke-width="2.2"/><rect x="636.0" y="1005.0" width="9.0" height="9" fill="#ff00ff"/><rect x="774.0" y="978.0" width="9.0" height="9" fill="#ff00ff"/><rect x="912.0" y="952.9" width="9.0" height="9" fill="#ff00ff"/><rect x="1050.0" y="929.2" width="9.0" height="9" fill="#ff00ff"/><rect x="1188.0" y="904.9" width="9.0" height="9" fill="#ff00ff"/><rect x="1326.0" y="883.1" width="9.0" height="9" fill="#ff00ff"/><rect x="1464.0" y="861.7" width="9.0" height="9" fill="#ff00ff"/><rect x="1602.0" y="841.9" width="9.0" height="9" fill="#ff00ff"/><rect x="1740.0" y="825.0" width="9.0" height="9" fill="#ff00ff"/><rect x="1878.0" y="811.1" width="5.0" height="9" fill="#ff00ff"/></svg>
<div class="t m" style="left:505.5px;top:562.1px;font-size:15.5px;color:#cecece;letter-spacing:0.33px;">140%</div>
<div class="t m" style="left:505.5px;top:586.8px;font-size:15.5px;color:#cecece;letter-spacing:0.33px;">130%</div>
<div class="t m" style="left:505.5px;top:611.5px;font-size:15.5px;color:#cecece;letter-spacing:0.33px;">120%</div>
<div class="t m" style="left:505.5px;top:636.2px;font-size:15.5px;color:#cecece;letter-spacing:0.33px;">110%</div>
<div class="t m" style="left:505.5px;top:660.9px;font-size:15.5px;color:#cecece;letter-spacing:0.33px;">100%</div>
<div class="t m" style="left:505.5px;top:685.6px;font-size:15.5px;color:#cecece;letter-spacing:0.37px;">90%</div>
<div class="t m" style="left:505.5px;top:710.3px;font-size:15.5px;color:#cecece;letter-spacing:0.37px;">80%</div>
<div class="t m" style="left:505.5px;top:735.0px;font-size:15.5px;color:#cecece;letter-spacing:0.37px;">70%</div>
<div class="t m" style="left:505.5px;top:759.7px;font-size:15.5px;color:#cecece;letter-spacing:0.37px;">60%</div>
<div class="t m" style="left:505.5px;top:833.4px;font-size:15.5px;color:#cecece;letter-spacing:0.00px;">8</div>
<div class="t m" style="left:505.5px;top:882.2px;font-size:15.5px;color:#cecece;letter-spacing:0.00px;">6</div>
<div class="t m" style="left:505.5px;top:931.4px;font-size:15.5px;color:#cecece;letter-spacing:0.00px;">4</div>
<div class="t m" style="left:505.5px;top:980.4px;font-size:15.5px;color:#cecece;letter-spacing:0.00px;">2</div>
<div class="t m" style="left:643.0px;top:784.6px;font-size:15.5px;color:rgb(232,232,232);letter-spacing:0.78px;">10% White</div>
<div class="t m" style="left:643.0px;top:1030.6px;font-size:15.5px;color:rgb(232,232,232);letter-spacing:0.78px;">10% White</div>
<div class="t m" style="left:781.0px;top:784.6px;font-size:15.5px;color:rgb(208,208,208);letter-spacing:0.78px;">20% White</div>
<div class="t m" style="left:781.0px;top:1030.6px;font-size:15.5px;color:rgb(208,208,208);letter-spacing:0.78px;">20% White</div>
<div class="t m" style="left:919.0px;top:784.6px;font-size:15.5px;color:rgb(180,180,180);letter-spacing:0.78px;">30% White</div>
<div class="t m" style="left:919.0px;top:1030.6px;font-size:15.5px;color:rgb(180,180,180);letter-spacing:0.78px;">30% White</div>
<div class="t m" style="left:1057.0px;top:784.6px;font-size:15.5px;color:rgb(150,150,150);letter-spacing:0.78px;">40% White</div>
<div class="t m" style="left:1057.0px;top:1030.6px;font-size:15.5px;color:rgb(150,150,150);letter-spacing:0.78px;">40% White</div>
<div class="t m" style="left:1195.0px;top:784.6px;font-size:15.5px;color:rgb(134,134,134);letter-spacing:0.78px;">50% White</div>
<div class="t m" style="left:1195.0px;top:1030.6px;font-size:15.5px;color:rgb(134,134,134);letter-spacing:0.78px;">50% White</div>
<div class="t m" style="left:1333.0px;top:784.6px;font-size:15.5px;color:rgb(108,108,108);letter-spacing:0.78px;">60% White</div>
<div class="t m" style="left:1333.0px;top:1030.6px;font-size:15.5px;color:rgb(108,108,108);letter-spacing:0.78px;">60% White</div>
<div class="t m" style="left:1471.0px;top:784.6px;font-size:15.5px;color:rgb(80,80,80);letter-spacing:0.78px;">70% White</div>
<div class="t m" style="left:1471.0px;top:1030.6px;font-size:15.5px;color:rgb(80,80,80);letter-spacing:0.78px;">70% White</div>
<div class="t m" style="left:1609.0px;top:784.6px;font-size:15.5px;color:rgb(56,56,56);letter-spacing:0.78px;">80% White</div>
<div class="t m" style="left:1609.0px;top:1030.6px;font-size:15.5px;color:rgb(56,56,56);letter-spacing:0.78px;">80% White</div>
<div class="t m" style="left:1747.0px;top:784.6px;font-size:15.5px;color:rgb(30,30,30);letter-spacing:0.78px;">90% White</div>
<div class="t m" style="left:1747.0px;top:1030.6px;font-size:15.5px;color:rgb(30,30,30);letter-spacing:0.78px;">90% White</div>
<div class="t b" style="left:1070.5px;top:555.8px;font-size:17.5px;color:#e4dc22;letter-spacing:0.32px;">Gray Scale Balance w/o gamma</div>
<div class="t b" style="left:1677.0px;top:976.8px;font-size:20px;color:#8e8e8e;letter-spacing:0.00px;-webkit-text-stroke:0;font-weight:600;">hcfr.sourceforge.net</div>
<div class="a" style="left:0px;top:1060.7px;width:1896px;height:3px;background:#8a8a8a;"></div>
<div class="a" style="left:0px;top:1063.5px;width:1896px;height:3.5px;background:#acacac;"></div>
<div class="a" style="left:0px;top:1067px;width:1920px;height:23px;background:#f0f0f0;"></div>
<div class="a" style="left:0px;top:1067px;width:1.5px;height:22px;background:#808080;"></div>
<div class="a" style="left:24px;top:1077px;width:1811px;height:3px;background:#7c7c7c;"></div>
<div class="a" style="left:0px;top:1089.5px;width:1920px;height:3px;background:#f8f8f8;"></div>
<div class="a" style="left:0px;top:1092.5px;width:1920px;height:24px;background:#f0f0f0;"></div>
<svg style="left:0;top:0" width="1920" height="1200"><path d="M160 1093.200H1920" stroke="#000" stroke-width="1.500"/><path d="M0 1093.200H69" stroke="#000" stroke-width="1.500"/><path d="M148.7 1093.200L158.6 1115.500H234.1L244 1093.200z" fill="#f0f0f0"/><path d="M148.7 1093.200L158.6 1115.500H234.1L244 1093.200" fill="none" stroke="#1a1a1a" stroke-width="1.300"/><path d="M233 1093.200L242.9 1115.500H299.8L309.7 1093.200z" fill="#f0f0f0"/><path d="M233 1093.200L242.9 1115.500H299.8L309.7 1093.200" fill="none" stroke="#1a1a1a" stroke-width="1.300"/><path d="M298.6 1093.200L308.5 1115.500H431.1L441 1093.200z" fill="#f0f0f0"/><path d="M298.6 1093.200L308.5 1115.500H431.1L441 1093.200" fill="none" stroke="#1a1a1a" stroke-width="1.300"/><path d="M428.8 1093.200L438.7 1115.500H528.3000000000001L538.2 1093.200z" fill="#f0f0f0"/><path d="M428.8 1093.200L438.7 1115.500H528.3000000000001L538.2 1093.200" fill="none" stroke="#1a1a1a" stroke-width="1.300"/><path d="M68.700 1092L78.700 1115.500H149.400L160 1092z" fill="#fff"/><path d="M68.700 1093L78.700 1115.500H149.400L160 1093" fill="none" stroke="#1a1a1a" stroke-width="1.300"/><rect x="0" y="1093.500" width="67.500" height="22" fill="#000"/><rect x="1" y="1094.500" width="20" height="19.800" fill="#f0f0f0"/><path d="M20.3 1094.500v19.800" stroke="#9a9a9a" stroke-width="1.400"/><path d="M1 1113.600h20" stroke="#9a9a9a" stroke-width="1.400"/><path d="M1.5 1114v-19h19" stroke="#fff" stroke-width="1" fill="none"/><rect x="22.5" y="1094.500" width="20" height="19.800" fill="#f0f0f0"/><path d="M41.8 1094.500v19.800" stroke="#9a9a9a" stroke-width="1.400"/><path d="M22.5 1113.600h20" stroke="#9a9a9a" stroke-width="1.400"/><path d="M23.0 1114v-19h19" stroke="#fff" stroke-width="1" fill="none"/><rect x="44" y="1094.500" width="21.5" height="19.800" fill="#f0f0f0"/><path d="M64.8 1094.500v19.800" stroke="#9a9a9a" stroke-width="1.400"/><path d="M44 1113.600h21.5" stroke="#9a9a9a" stroke-width="1.400"/><path d="M44.5 1114v-19h20.5" stroke="#fff" stroke-width="1" fill="none"/><path d="M7.500 1100l9 9M16.500 1100l-9 9" stroke="#000" stroke-width="1.700"/><path d="M35.500 1099.500v10l-5.500-5z" fill="#000"/><path d="M52 1099.500v10l5.500-5z" fill="#000"/></svg>
<div class="t b" style="left:83.1px;top:1098.8px;font-size:11.5px;color:#000;letter-spacing:0.25px;transform:scaleX(1.130);transform-origin:0 50%;">Measures</div>
<div class="t" style="left:167.3px;top:1098.7px;font-size:11.5px;color:#222;letter-spacing:0.03px;">Luminance</div>
<div class="t" style="left:250.0px;top:1098.7px;font-size:11.5px;color:#222;letter-spacing:0.03px;">Gamma</div>
<div class="t" style="left:322.7px;top:1098.7px;font-size:11.5px;color:#222;letter-spacing:0.00px;transform:scaleX(0.996);transform-origin:0 50%;">Color temperature</div>
<div class="t" style="left:449.6px;top:1098.7px;font-size:11.5px;color:#222;letter-spacing:0.05px;">CIE Diagram</div>
<svg style="left:1641px;top:1097px" width="19" height="18" viewBox="0 0 19 18"><path d="M1 1h17v8c0 5-3 7-4.500 8-1.500-1-2.500-1-4-1s-2.500 0-4 1C4 16 1 14 1 9z" fill="#6a6a18" stroke="#3a3a08" stroke-width=".8"/><rect x="4" y="3" width="8" height="6" fill="#e02020"/><path d="M6 7c1-3 3-3 4-1" stroke="#fff" stroke-width="1.200" fill="none"/><circle cx="12.500" cy="11" r="3" fill="#f0e020"/></svg>
<div class="a" style="left:1798px;top:1098px;width:15px;height:15px;background:#fff;border-top:2px solid #7a7a7a;border-left:2px solid #7a7a7a;border-right:1px solid #e8e8e8;border-bottom:1px solid #e8e8e8"></div>
<div class="t b" style="left:1822.0px;top:1097.5px;font-size:16px;color:#111;letter-spacing:0.45px;">Reference</div>
<div class="a" style="left:0px;top:1116.5px;width:1920px;height:24px;background:linear-gradient(90deg,#e4ebf5,#e9eef7 50%,#eef2fa);"></div>
<div class="t" style="left:3.0px;top:1121.7px;font-size:15px;color:#111;letter-spacing:0.00px;transform:scaleX(0.911);transform-origin:0 50%;">Ready</div>
<div class="a" style="left:1697.5px;top:1117.7px;width:94.0px;height:22px;background:transparent;border:1.5px solid #adc4e0;border-right:1px solid #f4f8fc;border-bottom:none"></div>
<div class="a" style="left:1795px;top:1117.7px;width:36px;height:22px;background:transparent;border:1.5px solid #adc4e0;border-right:1px solid #f4f8fc;border-bottom:none"></div>
<div class="a" style="left:1834px;top:1117.7px;width:42px;height:22px;background:transparent;border:1.5px solid #adc4e0;border-right:1px solid #f4f8fc;border-bottom:none"></div>
<div class="a" style="left:1879px;top:1117.7px;width:41px;height:22px;background:transparent;border:1.5px solid #adc4e0;border-right:1px solid #f4f8fc;border-bottom:none"></div>
<div class="a" style="left:0px;top:1140px;width:1920px;height:60px;background:linear-gradient(90deg,#cfe2ea 0%,#d0e3e8 12%,#d5e6e0 22%,#d3e5e3 30%,#cfe2ea 42%,#d0e3ec 70%,#cde1ee 100%);"></div>
<div class="a" style="left:0px;top:1140px;width:1920px;height:1px;background:#bccad6;"></div>
<svg style="left:0;top:0" width="1920" height="1200"><defs><linearGradient id="gcl" x1="0" y1="0" x2="0" y2="1"><stop offset="0" stop-color="#f4f8ff"/><stop offset="1" stop-color="#a8c4f0"/></linearGradient><linearGradient id="gwin" x1="0" y1="0" x2="1" y2="1"><stop offset="0" stop-color="#28a0f0"/><stop offset="1" stop-color="#0868c8"/></linearGradient><linearGradient id="gfo" x1="0" y1="0" x2="0" y2="1"><stop offset="0" stop-color="#ffd860"/><stop offset="1" stop-color="#f0b020"/></linearGradient><linearGradient id="ged" x1="0" y1="0" x2="1" y2="1"><stop offset="0" stop-color="#30c8a0"/><stop offset=".5" stop-color="#1890d8"/><stop offset="1" stop-color="#0c58a8"/></linearGradient><linearGradient id="gst" x1="0" y1="0" x2="0" y2="1"><stop offset="0" stop-color="#1c5cb0"/><stop offset="1" stop-color="#0c3878"/></linearGradient><linearGradient id="gic" x1="0" y1="0" x2="0" y2="1"><stop offset="0" stop-color="#000"/><stop offset=".5" stop-color="#303030"/><stop offset="1" stop-color="#e0e0e0"/></linearGradient></defs><path d="M31 1177c-4 0-6-3-6-5.500 0-3 2.500-5.500 6-5.500 1-5 5-8 10-8 5.500 0 9 3.500 10 8 3 0 5 2.500 5 5.500s-2.500 5.500-5.500 5.500z" fill="url(#gcl)" stroke="#98b8e8" stroke-width=".8"/><rect x="667" y="1156" width="13.800" height="13.800" rx="1" fill="url(#gwin)"/><rect x="682.5" y="1156" width="13.800" height="13.800" rx="1" fill="url(#gwin)"/><rect x="667" y="1171.5" width="13.800" height="13.800" rx="1" fill="url(#gwin)"/><rect x="682.5" y="1171.5" width="13.800" height="13.800" rx="1" fill="url(#gwin)"/><rect x="714.500" y="1150.500" width="272" height="39" rx="19.500" fill="#f2f6fa" stroke="#d4dce6" stroke-width="1"/><circle cx="735.500" cy="1168.500" r="6.500" fill="none" stroke="#222" stroke-width="1.800"/><path d="M740.500 1173.500l5.500 5.500" stroke="#222" stroke-width="2" stroke-linecap="round"/><ellipse cx="952" cy="1184" rx="27" ry="3.500" fill="#8a9a40"/><ellipse cx="956" cy="1170" rx="15" ry="11" fill="#f0ead8"/><ellipse cx="942" cy="1165" rx="8" ry="9" fill="#e8dcc0"/><path d="M935 1160c-3-3-2-7 2-6M949 1160c3-3 2-7-2-6" stroke="#b89860" stroke-width="2.500" fill="none"/><path d="M948 1179v6M956 1180v5M964 1179v6" stroke="#c8b898" stroke-width="2.500"/><ellipse cx="941" cy="1170" rx="4" ry="5" fill="#d8c8a8"/><rect x="1004" y="1163" width="22" height="22" rx="2.500" fill="#202020"/><rect x="1011" y="1156" width="22" height="22" rx="2.500" fill="#e8e8e8" opacity=".92"/><rect x="1011" y="1163" width="15" height="15" fill="#8a8a8a"/><path d="M1057 1160c0-1.500 1-2.500 2.500-2.500h8l3 3.500h16c1.500 0 2.500 1 2.500 2.500v19c0 1.500-1 2.500-2.500 2.500h-27c-1.500 0-2.500-1-2.500-2.500z" fill="#e8a818"/><rect x="1057" y="1164" width="32" height="21" rx="2.500" fill="url(#gfo)"/><rect x="1064" y="1176" width="18" height="9" rx="1.500" fill="#1878d0"/><rect x="1067" y="1179" width="12" height="3" fill="#a8d8ff"/><circle cx="1128" cy="1171" r="15" fill="url(#ged)"/><path d="M1119 1176c0-7 6-11 12-10 5 1 8 4 8 8-2 3-6 4-9 3 3-1 4-4 2-6-3-2-8 0-8 5 0 3 2 6 5 8-6-1-10-4-10-8z" fill="#d8f4f0" opacity=".9"/><path d="M1176 1162c0-5 3-7 7-7s7 2 7 7" fill="none" stroke="#48a8e8" stroke-width="2"/><rect x="1168" y="1161" width="30" height="26" rx="3.500" fill="url(#gst)"/><rect x="1177" y="1167" width="5.500" height="5.500" fill="#f05030"/><rect x="1183.500" y="1167" width="5.500" height="5.500" fill="#80c830"/><rect x="1177" y="1173.500" width="5.500" height="5.500" fill="#30a8f0"/><rect x="1183.500" y="1173.500" width="5.500" height="5.500" fill="#f8c020"/><rect x="1214" y="1146" width="48" height="48" rx="5" fill="#ecf3f9" stroke="#f8fbfd" stroke-width="1"/><rect x="1223" y="1155" width="30" height="30" fill="url(#gic)"/><rect x="1226" y="1165" width="6" height="19" fill="#d80000"/><rect x="1235" y="1160.500" width="6" height="23.500" fill="#08c008"/><rect x="1244" y="1167" width="5.500" height="17" fill="#0818e0"/><rect x="1228" y="1190" width="20" height="3.500" rx="1.700" fill="#0a78d4"/><path d="M1562 1173.500l6-6 6 6" fill="none" stroke="#222" stroke-width="1.600"/><path d="M1602 1176c-3 0-4.500-2-4.500-4s2-4 4.500-4c.8-3 3-4.500 6-4.500 3.500 0 5.500 2 6.500 5 2.500 0 4 1.500 4 3.700s-1.700 3.800-4 3.800z" fill="#c4c4c4" stroke="#333" stroke-width="1.300"/><path d="M1599 1174l9-7 10 7z" fill="#8a8a8a"/><path d="M1693 1166.500c5-5 13-5 18 0M1696 1170c3.500-3.500 8.500-3.500 12 0M1699 1173.500c2-2 4-2 6 0" fill="none" stroke="#222" stroke-width="1.500"/><circle cx="1702" cy="1176.500" r="1.300" fill="#222"/><path d="M1723 1167.500h3l4.500-4v14l-4.500-4h-3z" fill="none" stroke="#222" stroke-width="1.300" stroke-linejoin="round"/><path d="M1734 1166c1.800 2.500 1.800 6.500 0 9M1737.500 1163.500c3 4 3 10 0 14" fill="none" stroke="#222" stroke-width="1.300"/><rect x="1755" y="1164.500" width="15.500" height="11" rx="2.500" fill="none" stroke="#222" stroke-width="1.300"/><rect x="1757.500" y="1167" width="10.500" height="6" rx="1" fill="#222"/><path d="M1772 1168v4" stroke="#222" stroke-width="1.800"/><path d="M1754 1163l4-2v4" fill="none" stroke="#222" stroke-width="1.200"/><path d="M1885 1161c-4 0-6.500 3-6.500 7v5l-2 3.500h17l-2-3.500v-5c0-4-2.500-7-6.500-7z" fill="#0a46a8"/><path d="M1882.500 1178.500a2.600 2.600 0 0 0 5 0z" fill="#0a46a8"/></svg>
<div class="t" style="left:65.0px;top:1152.7px;font-size:14.5px;color:#222;letter-spacing:0.00px;transform:scaleX(0.892);transform-origin:0 50%;">-1°C</div>
<div class="t" style="left:65.0px;top:1172.7px;font-size:14.5px;color:#555;letter-spacing:0.00px;transform:scaleX(1.055);transform-origin:0 50%;">Облачно</div>
<div class="t" style="left:760.0px;top:1161.6px;font-size:17px;color:#444;letter-spacing:0.22px;">Поиск</div>
<div class="t" style="left:1642.0px;top:1164.1px;font-size:14px;color:#222;letter-spacing:0.00px;transform:scaleX(0.927);transform-origin:0 50%;">РУС</div>
<div class="t" style="right:54.0px;top:1153.0px;font-size:14.5px;color:#222;">14:19</div>
<div class="t" style="right:54.0px;top:1173.0px;font-size:14.5px;color:#222;">05.02.2025</div>
</body></html>
